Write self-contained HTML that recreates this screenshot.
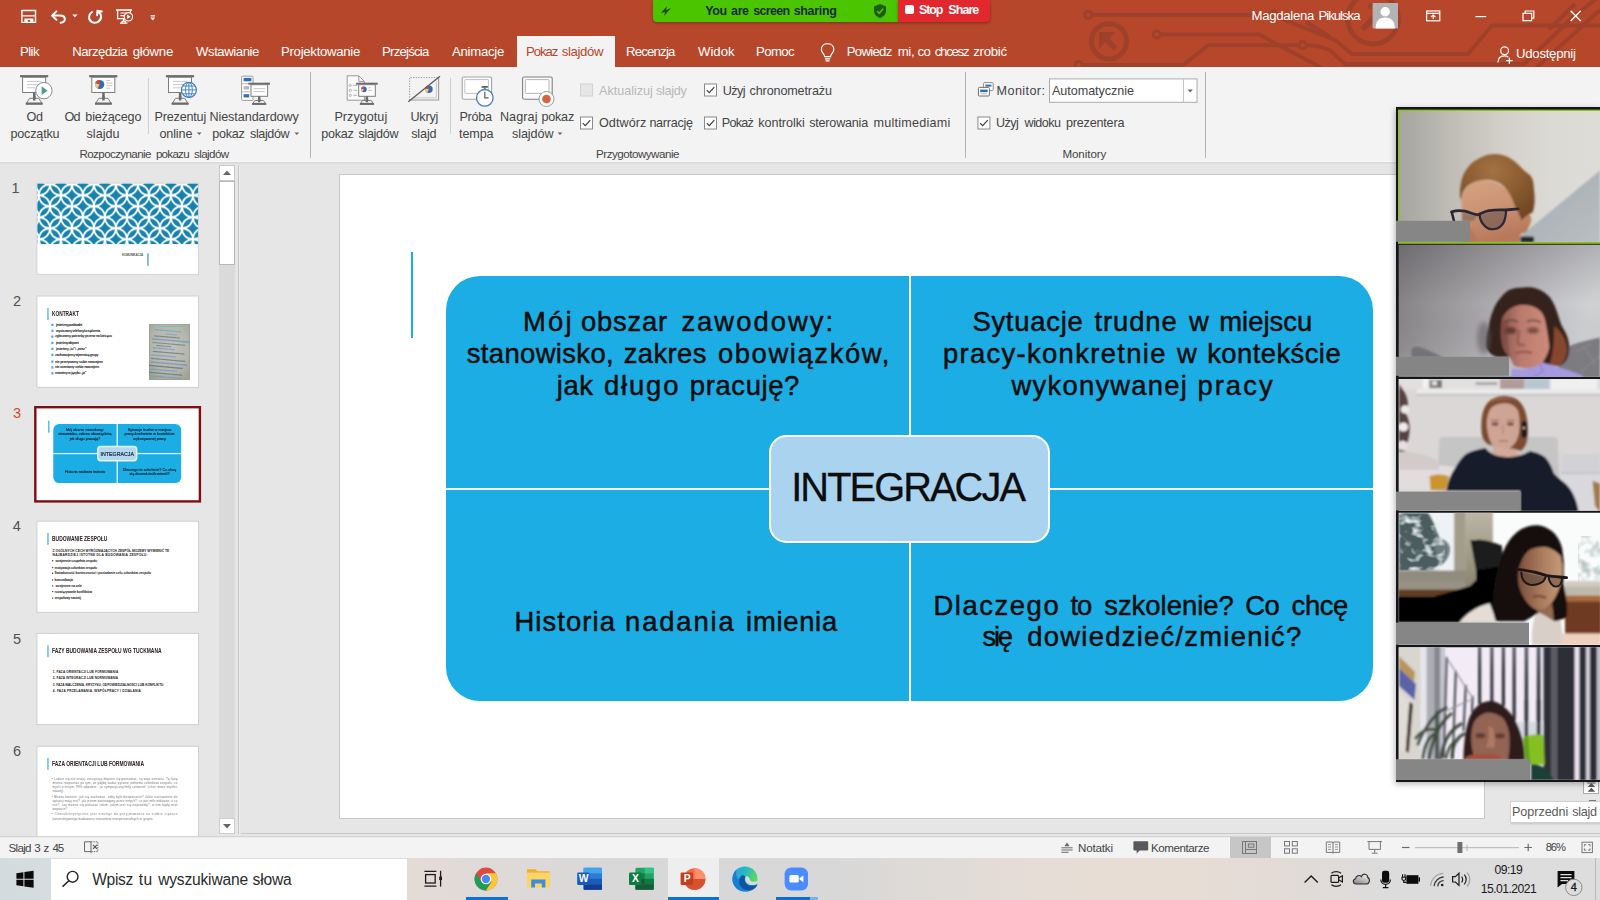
<!DOCTYPE html>
<html lang="pl">
<head>
<meta charset="utf-8">
<title>PowerPoint – Pokaz slajdów</title>
<style>
html,body{margin:0;padding:0;background:#e6e6e6;}
body{width:1600px;height:900px;overflow:hidden;font-family:"Liberation Sans",sans-serif;}
#root{position:relative;width:1600px;height:900px;overflow:hidden;background:#e6e6e6;}
.a{position:absolute;}
.t{position:absolute;white-space:pre;line-height:1;font-family:"Liberation Sans",sans-serif;}
svg{position:absolute;overflow:visible;}
</style>
</head>
<body>
<div id="root">
<!-- title bar + tab row -->
<div class="a" style="left:0;top:0;width:1600px;height:67px;background:#b7472a;"></div>
<!-- circuit decoration -->
<svg style="left:0;top:0" width="1600" height="67" viewBox="0 0 1600 67" fill="none" stroke="#9e412a" stroke-width="4" stroke-linejoin="round">
<clipPath id="tbc"><rect x="0" y="0" width="1600" height="67"/></clipPath>
<g clip-path="url(#tbc)">
<circle cx="1088.3" cy="14.8" r="3.6" stroke-width="3"/><path d="M1093 14.8 H1270"/><circle cx="1274" cy="14.8" r="3.6" stroke-width="3"/><path d="M1277 17 L1335 40 L1352 54 H1468 L1492 25.5 H1600"/>
<circle cx="1109" cy="41.3" r="17.6" stroke-width="5"/><path d="M1115.5 48.5 L1102 35" stroke-width="5.5"/><path d="M1098.8 32 H1115.7 L1098.8 49 Z" fill="#9e412a" stroke="none"/>
<circle cx="1156.7" cy="34.6" r="3.6" stroke-width="3"/><path d="M1161 34.6 H1259 L1322 68"/>
<circle cx="1078.6" cy="65" r="3.6" stroke-width="3"/><path d="M1083 65 H1183 L1208.5 45.2 H1298.5"/><circle cx="1302.7" cy="45.2" r="3.6" stroke-width="3"/><path d="M1307 45.2 C1318 45.2 1324 47 1331 51 L1345 64 H1524 L1573 17 L1600 -4"/>
<path d="M1306 22 L1330 37"/>
<circle cx="1373" cy="18.6" r="25.4" stroke-width="5"/><path d="M1362 29.5 L1382 9.5" stroke-width="5.5"/><path d="M1368 6 H1386 V24" stroke-width="5"/>
<path d="M1536 68 L1600 10"/><path d="M1549 29.5 L1575 4"/>
</g>
</svg>
<!-- active tab -->
<div class="a" style="left:516.6px;top:36px;width:98.2px;height:32px;background:#f3f3f3;"></div>
<!-- ribbon -->
<div class="a" style="left:0;top:67px;width:1600px;height:95px;background:#f3f3f3;"></div>
<div class="a" style="left:0;top:161px;width:1600px;height:1px;background:#f9f9f9;"></div>
<div class="a" style="left:0;top:162px;width:1600px;height:1px;background:#d9d9d9;"></div>
<div class="a" style="left:0;top:163px;width:1600px;height:1px;background:#dedede;"></div>
<!-- ribbon separators -->
<div class="a" style="left:148px;top:78px;width:1px;height:56px;background:#d0d0d0;"></div>
<div class="a" style="left:310px;top:72px;width:1px;height:86px;background:#b4b4b4;"></div>
<div class="a" style="left:450px;top:78px;width:1px;height:56px;background:#d0d0d0;"></div>
<div class="a" style="left:965px;top:72px;width:1px;height:86px;background:#b4b4b4;"></div>
<div class="a" style="left:1205px;top:72px;width:1px;height:86px;background:#b4b4b4;"></div>
<!-- zoom share bar -->
<div class="a" style="left:653px;top:0;width:245px;height:22px;background:#4ac500;border-radius:0 0 0 4px;box-shadow:0 1px 3px rgba(0,0,0,.35);"></div>
<div class="a" style="left:898px;top:0;width:92px;height:22px;background:#e0282e;border-radius:0 0 4px 0;box-shadow:0 1px 3px rgba(0,0,0,.35);"></div>
<div class="a" style="left:905px;top:5px;width:9px;height:9px;background:#fff;border-radius:2px;"></div>
<svg style="left:658px;top:4px" width="16" height="14" viewBox="0 0 16 14"><path d="M3 9 L9 2 L8 6 L13 4 L6 12 L7 8 Z" fill="#1d4d12"/></svg>
<svg style="left:873px;top:3px" width="14" height="16" viewBox="0 0 14 16"><path d="M7 1 L13 3.5 V8 C13 11.5 10 14 7 15 C4 14 1 11.5 1 8 V3.5 Z" fill="#1d5a14"/><path d="M4 8 L6.3 10.3 L10.2 5.8" stroke="#4ac500" stroke-width="1.6" fill="none"/></svg>
<!-- left pane / main area -->
<div class="a" style="left:0;top:164px;width:1600px;height:672px;background:#e6e6e6;"></div>
<div class="a" style="left:238px;top:165px;width:1px;height:669px;background:#c6c6c6;"></div>
<div class="a" style="left:239px;top:165px;width:1px;height:669px;background:#ededed;"></div>
<!-- thumb scrollbar -->
<div class="a" style="left:219px;top:165px;width:16px;height:653px;background:#dadada;"></div>
<div class="a" style="left:219px;top:165px;width:14px;height:14px;background:#fff;border:1px solid #c8c8c8;"></div>
<svg style="left:222px;top:169px" width="10" height="8" viewBox="0 0 10 8"><path d="M1 6 L5 1.5 L9 6 Z" fill="#666"/></svg>
<div class="a" style="left:219px;top:181px;width:14px;height:82px;background:#fff;border:1px solid #b9b9b9;"></div>
<div class="a" style="left:219px;top:818px;width:14px;height:14px;background:#fff;border:1px solid #cdcdcd;"></div>
<svg style="left:222px;top:822px" width="10" height="8" viewBox="0 0 10 8"><path d="M1 2 L5 6.5 L9 2 Z" fill="#666"/></svg>
<!-- title bar icons -->
<svg style="left:0;top:0" width="1600" height="67" viewBox="0 0 1600 67" fill="none" stroke="#fff" stroke-width="1.3">
<!-- save -->
<path d="M21.9 10.5 H35.5 V22.4 H21.9 Z M21.9 15.9 H35.5" stroke-width="1.4"/>
<path d="M24.4 18.4 H33.4 V22.6 H30.2 V20 H27.8 V22.6 H24.4 Z" fill="#fff" stroke="none"/>
<!-- undo -->
<path d="M56.4 11.4 L52 15.6 L56.4 19.8 M52.6 15.6 H60 C66.4 15.6 66.4 22.6 60.6 22.8" stroke-width="2" stroke-linejoin="round" stroke-linecap="round"/>
<path d="M72.2 14.4 H77.6 L74.9 17.2 Z" fill="#fff" stroke="none"/>
<!-- repeat -->
<path d="M92 12 C88.4 14.4 88 19.6 91.6 21.8 C95.4 24 100.6 22 101 17.2 C101.2 14.6 99.6 12.4 97.6 11.4 M97.2 15.2 L97.4 10.8 L101.8 11.4" stroke-width="2" stroke-linejoin="round" stroke-linecap="round"/>
<!-- present from start -->
<path d="M116 10 H132" stroke-width="1.6"/><path d="M117.6 10.4 V18.6 H125.4 M130.4 10.4 V12.4 M123.6 18.8 V21.8 M120 23.2 H127.4 M121.4 22.4 L123.6 20.4 L126 22.4" stroke-width="1.3"/>
<path d="M120.4 13 H126 M120.4 15.6 H124.4" stroke-width="1.1"/>
<circle cx="128.4" cy="16.8" r="4.2" stroke-width="1.2" fill="#b7472a"/><path d="M127.2 14.6 L130.6 16.8 L127.2 19 Z" fill="#fff" stroke="none"/>
<!-- customize -->
<path d="M150.6 15.8 H155"/><path d="M150.4 17.6 H155.2 L152.8 20.6 Z" fill="#fff" stroke="none"/>
<!-- bulb -->
<path d="M824.6 56.6 C824.6 54 821.4 52.6 821.4 49.4 C821.4 45.8 824.2 43.6 827.6 43.6 C831 43.6 833.8 45.8 833.8 49.4 C833.8 52.6 830.6 54 830.6 56.6 Z M825 58.8 H830.2 M825.6 60.8 H829.6" stroke-width="1.2"/>
<!-- avatar -->
<rect x="1372.6" y="3" width="25.4" height="25.4" fill="#b3b3b3" stroke="none"/>
<circle cx="1385.2" cy="11.8" r="4.7" fill="#fff" stroke="none"/>
<path d="M1375.6 28.4 C1375.6 21 1379 17.4 1385.2 17.4 C1391.4 17.4 1394.8 21 1394.8 28.4 Z" fill="#fff" stroke="none"/>
<!-- ribbon display options -->
<rect x="1426.6" y="11" width="13.2" height="9.8" stroke-width="1.2"/><path d="M1426.6 13.4 H1439.8 M1433.2 19 V15.2 M1431 17 L1433.2 14.9 L1435.4 17" stroke-width="1.1"/>
<!-- min/max/close -->
<path d="M1475.4 16.6 H1486.2" stroke-width="1.2"/>
<path d="M1523 13.4 H1531.6 V20.6 H1523 Z M1525.2 13.2 V11 H1533.8 V18.2 H1531.8" stroke-width="1.2"/>
<path d="M1570.6 10.8 L1580.8 21 M1580.8 10.8 L1570.6 21" stroke-width="1.3"/>
<!-- share icon -->
<circle cx="1504.6" cy="50.8" r="3.9" stroke-width="1.2"/><path d="M1498 62.4 C1498 57.6 1500.6 55.8 1504.4 55.8 C1506 55.8 1507.2 56.2 1508.2 57" stroke-width="1.2"/><path d="M1506 60.6 H1512.6 M1509.3 57.4 V63.8" stroke-width="1.2"/>
</svg>
<!-- ribbon icons -->
<svg style="left:0;top:0" width="1600" height="165" viewBox="0 0 1600 165">
<defs>
<g id="easel">
  <rect x="0" y="0" width="28.2" height="2.2" fill="#6b6b6b"/>
  <rect x="2.6" y="2.2" width="23" height="15.2" fill="#fff" stroke="#7d7d7d" stroke-width="1"/>
  <rect x="13" y="17.6" width="2.5" height="8" fill="#6b6b6b"/>
  <path d="M9.6 23.2 H18.8 L22.4 29 H6 Z" fill="#f3f3f3" stroke="#7d7d7d" stroke-width="1" stroke-linejoin="round"/>
  <rect x="5.8" y="27.4" width="16.8" height="2.1" fill="#6b6b6b"/>
  <rect x="13" y="21" width="2.5" height="4.4" fill="#6b6b6b"/>
</g>
<g id="easelS">
  <rect x="0" y="0" width="21.6" height="2" fill="#6b6b6b"/>
  <rect x="2.6" y="2" width="16.6" height="11.6" fill="#fff" stroke="#7d7d7d" stroke-width="1"/>
  <rect x="9.6" y="13.6" width="2.4" height="6" fill="#6b6b6b"/>
  <path d="M6.4 17.8 H15.2 L17.6 21.6 H4 Z" fill="#f3f3f3" stroke="#7d7d7d" stroke-width="1" stroke-linejoin="round"/>
  <rect x="3.8" y="20.2" width="14" height="1.9" fill="#6b6b6b"/>
  <rect x="9.6" y="15.5" width="2.4" height="4" fill="#6b6b6b"/>
</g>
<g id="pie">
  <circle cx="0" cy="0" r="4.6" fill="#2f6db5"/>
  <path d="M0 0 L-2.1 4.1 A4.6 4.6 0 0 1 -4.4 -1.4 Z" fill="#f5c77e"/>
  <path d="M0 0 L-4.4 -1.4 A4.6 4.6 0 0 1 0.3 -4.6 Z" fill="#d9482b"/>
</g>
<g id="chk"><rect x="0.5" y="0.5" width="12" height="12" fill="#fff" stroke="#8a8a8a" stroke-width="1"/><path d="M2.8 6.6 L5.3 9.2 L10.3 3.6" fill="none" stroke="#3a3a3a" stroke-width="1.15"/></g>
</defs>
<!-- 1: Od początku -->
<use href="#easel" x="20" y="75.1"/>
<g stroke="#c9c9c9" stroke-width="1"><path d="M27 81.4 H41.5 M27 84.6 H41.5 M27 87.8 H35"/></g>
<circle cx="43.9" cy="90.6" r="8.2" fill="#fff" stroke="#8a8a8a" stroke-width="1"/>
<path d="M41.6 86.3 L47.6 90.7 L41.6 95.1 Z" fill="#4d9f80"/>
<!-- 2: Od bieżącego slajdu -->
<use href="#easel" x="89.2" y="75.1"/>
<use href="#pie" x="99.7" y="84.5"/>
<g stroke="#c4c4c4" stroke-width="1"><path d="M106.2 80.6 H110 M106.2 83.1 H112.4 M106.2 85.7 H112.4 M106.2 88.2 H110"/></g>
<!-- 3: Prezentuj online -->
<use href="#easel" x="165.9" y="75.1"/>
<g stroke="#c9c9c9" stroke-width="1"><path d="M173 81.4 H187 M173 84.6 H184 M173 87.8 H181"/></g>
<circle cx="188.9" cy="89.9" r="7.5" fill="#fff" stroke="#3f7bc6" stroke-width="1.2"/>
<g fill="none" stroke="#3f7bc6" stroke-width="0.95"><ellipse cx="188.9" cy="89.9" rx="3.4" ry="7.5"/><path d="M188.9 82.4 V97.4 M181.4 89.9 H196.4 M182.6 86 H195.2 M182.6 93.8 H195.2"/></g>
<!-- 4: Niestandardowy pokaz -->
<rect x="241.6" y="76.2" width="11.4" height="24.2" rx="1" fill="#fff" stroke="#9a9a9a" stroke-width="1"/>
<rect x="243.6" y="77.9" width="7.8" height="3.4" fill="#2f6db5"/>
<rect x="243.6" y="86.2" width="5.6" height="3.3" fill="#b5b5b5"/>
<rect x="243.6" y="94.2" width="5.6" height="3.2" fill="#2f6db5"/>
<g stroke="#b9b9b9" stroke-width="1"><path d="M242 83.7 H250 M242 91.8 H250"/></g>
<rect x="247.6" y="81.9" width="23" height="24" fill="#f3f3f3" opacity="0"/>
<use href="#easelS" x="248.4" y="82.7"/>
<g stroke="#c4c4c4" stroke-width="1"><path d="M253.6 88.7 H265 M253.6 91.6 H265"/></g>
<!-- 5: Przygotuj pokaz slajdów -->
<path d="M347.2 75.8 H358.8 L364.4 81.4 V100.2 H347.2 Z" fill="#fafafa" stroke="#9a9a9a" stroke-width="1" stroke-linejoin="round"/>
<path d="M358.8 75.8 V81.4 H364.4" fill="none" stroke="#9a9a9a" stroke-width="1"/>
<g fill="none" stroke="#a8a8a8" stroke-width="0.9"><circle cx="350.3" cy="85.4" r="1.1"/><circle cx="350.3" cy="90.3" r="1.1"/><circle cx="350.3" cy="95.3" r="1.1"/><path d="M353.4 85.4 H357 M353.4 90.3 H357 M353.4 95.3 H357"/></g>
<use href="#easelS" x="356.1" y="82.7"/>
<g transform="translate(363.9 89.3) scale(0.62)"><use href="#pie"/></g>
<g stroke="#c4c4c4" stroke-width="1"><path d="M368.4 87.8 H371 M368.4 90.4 H372"/></g>
<!-- 6: Ukryj slajd -->
<path d="M409.6 100 V77.6 H438.6" fill="none" stroke="#8a8a8a" stroke-width="1" stroke-dasharray="1.1 1.5"/>
<path d="M438.6 77.6 V100 H409.6" fill="none" stroke="#9c9c9c" stroke-width="1.1"/>
<path d="M436.4 81.5 V97.8 H414" fill="none" stroke="#c9c9c9" stroke-width="1"/>
<g transform="translate(428.9 89.3) scale(0.82)"><use href="#pie"/></g>
<path d="M408.3 101.7 L440 76.3" stroke="#5e5e5e" stroke-width="1.4"/>
<path d="M409.2 99.4 L437 77.2 L409.2 77.2 Z" fill="#f3f3f3" opacity="0.0"/>
<!-- 7: Próba tempa -->
<rect x="462.2" y="77" width="29.4" height="22.2" rx="1.6" fill="#fbfbfb" stroke="#a5a5a5" stroke-width="1.1"/>
<rect x="464.8" y="79.6" width="23.6" height="13.8" rx="0.8" fill="#fff" stroke="#c2c2c2" stroke-width="1"/>
<rect x="481.6" y="86" width="6.2" height="1.8" fill="#5e5e5e"/><rect x="483.8" y="87.6" width="1.9" height="2" fill="#7a7a7a"/>
<circle cx="484.8" cy="97.8" r="8.3" fill="#fff" stroke="#3f7bc6" stroke-width="1.3"/>
<path d="M484.8 91.8 V97.8 H488.6" fill="none" stroke="#5e5e5e" stroke-width="1.2"/>
<!-- 8: Nagraj pokaz slajdów -->
<rect x="522.6" y="77" width="29.6" height="22.2" rx="1.6" fill="#fbfbfb" stroke="#7f7f7f" stroke-width="1.1"/>
<rect x="525.4" y="79.6" width="23.6" height="13.8" rx="0.8" fill="#fff" stroke="#b5b5b5" stroke-width="1"/>
<circle cx="546.5" cy="99" r="7.5" fill="#fff" stroke="#9a9a9a" stroke-width="1"/>
<circle cx="546.5" cy="99" r="4.3" fill="#d95f3e"/>
<!-- dropdown arrows -->
<g fill="#666"><path d="M196.8 132.4 H201.6 L199.2 135 Z"/><path d="M294.4 132.4 H299.2 L296.8 135 Z"/><path d="M557.6 132.4 H562.4 L560 135 Z"/></g>
<!-- checkboxes -->
<rect x="580.5" y="84" width="12" height="12" fill="#e6e6e6" stroke="#d2d2d2" stroke-width="1"/>
<use href="#chk" x="580" y="116.5"/>
<use href="#chk" x="704" y="83.5"/>
<use href="#chk" x="704" y="116.5"/>
<use href="#chk" x="977.4" y="116.5"/>
<!-- monitor combo -->
<rect x="1049.5" y="78.9" width="147.5" height="23.4" fill="#fff" stroke="#ababab" stroke-width="1"/>
<path d="M1183.5 79 V102" stroke="#c4c4c4" stroke-width="1"/>
<path d="M1187.6 89.6 H1192.8 L1190.2 92.4 Z" fill="#666"/>
<!-- monitor icon -->
<rect x="983.6" y="82.6" width="9.6" height="8" rx="1" fill="#fff" stroke="#8a8a8a" stroke-width="1"/><rect x="985.4" y="84.6" width="6" height="2" fill="#2f6db5"/>
<rect x="978.4" y="87.4" width="11" height="8.6" rx="1" fill="#fff" stroke="#6f6f6f" stroke-width="1"/><rect x="980.2" y="89.6" width="7.4" height="2.6" fill="#2f6db5"/><path d="M980.5 93.8 H987" stroke="#b5b5b5" stroke-width="0.9"/>
</svg>
<!-- slide thumbnails -->
<svg style="left:0;top:164px" width="219" height="672" viewBox="0 164 219 672">
<defs>
<pattern id="circ" x="38.9" y="184.3" width="22" height="22" patternUnits="userSpaceOnUse">
<rect width="22" height="22" fill="#1782ad"/>
<g fill="none" stroke="#fff" stroke-width="1.75"><circle cx="0" cy="0" r="11"/><circle cx="22" cy="0" r="11"/><circle cx="0" cy="22" r="11"/><circle cx="22" cy="22" r="11"/><circle cx="11" cy="11" r="11"/><circle cx="11" cy="-11" r="11"/><circle cx="11" cy="33" r="11"/><circle cx="-11" cy="11" r="11"/><circle cx="33" cy="11" r="11"/></g>
</pattern>
<radialGradient id="paperG" cx=".5" cy=".42" r=".75"><stop offset="0" stop-color="#c0c4bb"/><stop offset=".6" stop-color="#b3b7ad"/><stop offset="1" stop-color="#9b9e92"/></radialGradient><filter id="tb" x="-5%" y="-5%" width="110%" height="110%"><feGaussianBlur stdDeviation="0.45"/></filter><clipPath id="ph2"><rect x="149" y="324" width="41" height="56"/></clipPath>
<clipPath id="t6c"><rect x="30" y="740" width="180" height="96"/></clipPath>
</defs>
<!-- 1 -->
<rect x="36.9" y="183.2" width="161.6" height="91.2" fill="#fff" stroke="#d4d4d4" stroke-width="1"/>
<rect x="37.4" y="183.7" width="160.6" height="60.4" fill="url(#circ)"/>
<rect x="147.2" y="253.4" width="1.5" height="12.4" fill="#5fa8cf"/>
<!-- 2 -->
<rect x="36.9" y="296" width="161.6" height="91.4" fill="#fff" stroke="#cfcfcf" stroke-width="1"/>
<rect x="47.2" y="308.2" width="1.5" height="11.8" fill="#63bdea"/>
<g fill="#4aa9e0"><rect x="51.3" y="323.7" width="2.1" height="2.3"/><rect x="51.3" y="329.7" width="2.1" height="2.3"/><rect x="51.3" y="335.5" width="2.1" height="2.3"/><rect x="51.3" y="341.8" width="2.1" height="2.3"/><rect x="51.3" y="347.7" width="2.1" height="2.3"/><rect x="51.3" y="353.7" width="2.1" height="2.3"/><rect x="51.3" y="360.5" width="2.1" height="2.3"/><rect x="51.3" y="366.3" width="2.1" height="2.3"/><rect x="51.3" y="372.1" width="2.1" height="2.3"/></g>
<rect x="149" y="324" width="41" height="56" fill="#9c9f93"/>
<rect x="150" y="324.6" width="39.4" height="54.4" fill="url(#paperG)"/>
<g filter="url(#tb)" fill="none" stroke-linecap="round" clip-path="url(#ph2)">
<path d="M158 326.4 H182" stroke="#86bca4" stroke-width="1.3"/>
<g transform="rotate(5 150 330)" stroke-dasharray="2.6 0.9 1.6 0.7 3.4 1.1 1.2 0.6" opacity=".62">
<path d="M155 329.2 H181 M166 332.6 H177" stroke="#6f97c6" stroke-width="1.2"/>
<path d="M155 335.4 H180" stroke="#62676a" stroke-width="1.2"/>
<path d="M153 338.6 H190" stroke="#5b8cc8" stroke-width="1.4"/>
<path d="M154 342.2 H186 M158 344.8 H172" stroke="#666b6c" stroke-width="1.1"/>
<path d="M155 347.4 H176" stroke="#6a96c8" stroke-width="1.3"/>
<path d="M155 351 H186" stroke="#62676a" stroke-width="1.2"/>
<path d="M154 354.6 H178" stroke="#6a96c8" stroke-width="1.3"/>
<path d="M154 358.2 H188" stroke="#5e6366" stroke-width="1.2"/>
<path d="M154 361.8 H190" stroke="#5b8cc8" stroke-width="1.4"/>
<path d="M152 365.4 H186" stroke="#585d60" stroke-width="1.3"/>
<path d="M152 368.8 H180" stroke="#6a96c8" stroke-width="1.3"/>
<path d="M152 372.2 H186" stroke="#5e6366" stroke-width="1.2"/>
<path d="M152 375.6 H186" stroke="#6a96c8" stroke-width="1.2"/>
</g>
</g>
<!-- 3 (selected) -->
<rect x="35.3" y="407.2" width="164.6" height="94.2" fill="#fff" stroke="#7b0f12" stroke-width="2.4"/>
<!-- 4 -->
<rect x="36.9" y="521.2" width="161.6" height="91.2" fill="#fff" stroke="#cfcfcf" stroke-width="1"/>
<rect x="47.2" y="533" width="1.5" height="11.8" fill="#63bdea"/>
<g fill="#333"><circle cx="52.6" cy="560.8" r=".7"/><circle cx="52.6" cy="567.6" r=".7"/><circle cx="52.6" cy="573.3" r=".7"/><circle cx="52.6" cy="579.9" r=".7"/><circle cx="52.6" cy="585.9" r=".7"/><circle cx="52.6" cy="591.6" r=".7"/><circle cx="52.6" cy="598.1" r=".7"/></g>
<!-- 5 -->
<rect x="36.9" y="633.4" width="161.6" height="91.2" fill="#fff" stroke="#cfcfcf" stroke-width="1"/>
<rect x="47.2" y="645.4" width="1.5" height="11.8" fill="#63bdea"/>
<!-- 6 -->
<g clip-path="url(#t6c)">
<rect x="36.9" y="746.3" width="161.6" height="91.2" fill="#fff" stroke="#cfcfcf" stroke-width="1"/>
<rect x="47.2" y="758" width="1.5" height="11.8" fill="#63bdea"/>
</g>
</svg>
<!-- thumbnail 3: scaled copy of the slide -->
<div class="a" style="left:37.8px;top:410.1px;width:160.5px;height:89.8px;overflow:hidden;">
<div class="a" style="left:0;top:0;width:1145px;height:644px;transform-origin:0 0;transform:scale(0.139);">
<div class="a" style="left:72px;top:77px;width:11px;height:86px;background:#55c0ee;"></div>
<div class="a" style="left:110px;top:101px;width:920px;height:425px;background:#1cade4;border-radius:42px;"></div>
<div class="a" style="left:565px;top:101px;width:10px;height:425px;background:#dff3fc;"></div>
<div class="a" style="left:110px;top:309px;width:920px;height:9px;background:#dff3fc;"></div>
<div class="a" style="left:425px;top:258px;width:290px;height:112px;background:#b4d8f0;border:10px solid #e6f4fc;border-radius:26px;box-sizing:border-box;"></div>
<div class="a" style="left:110px;top:124px;width:455px;text-align:center;font-size:27px;line-height:32px;color:#123;-webkit-text-stroke:1.1px #123;">Mój obszar zawodowy:<br>stanowisko, zakres obowiązków,<br>jak długo pracuję?</div>
<div class="a" style="left:575px;top:124px;width:455px;text-align:center;font-size:27px;line-height:32px;color:#123;-webkit-text-stroke:1.1px #123;">Sytuacje trudne w miejscu<br>pracy-konkretnie w kontekście<br>wykonywanej pracy</div>
<div class="a" style="left:110px;top:431px;width:455px;text-align:center;font-size:27px;line-height:32px;color:#123;-webkit-text-stroke:1.1px #123;">Historia nadania imienia</div>
<div class="a" style="left:575px;top:414px;width:455px;text-align:center;font-size:27px;line-height:32px;color:#123;-webkit-text-stroke:1.1px #123;">Dlaczego to szkolenie? Co chcę<br>się dowiedzieć/zmienić?</div>
<div class="a" style="left:425px;top:293px;width:290px;text-align:center;font-size:38px;line-height:44px;color:#123;-webkit-text-stroke:1.2px #123;">INTEGRACJA</div>
</div>
</div>
<!-- slide -->
<div class="a" style="left:339px;top:174px;width:1146px;height:645px;background:#fff;border:1px solid #c9c9c9;box-sizing:border-box;"></div>
<div class="a" style="left:411px;top:252px;width:2px;height:86px;background:#1cade4;"></div>
<div class="a" style="left:446px;top:276px;width:927px;height:425px;background:#1cade4;border-radius:34px;"></div>
<div class="a" style="left:909px;top:276px;width:2px;height:425px;background:#fff;"></div>
<div class="a" style="left:446px;top:488px;width:927px;height:2px;background:#fff;"></div>
<div class="a" style="left:769px;top:435px;width:281px;height:108px;background:#aad3ef;border:2px solid #fff;border-radius:17.5px;box-sizing:border-box;"></div>
<!-- next/prev slide buttons + tooltip -->
<div class="a" style="left:1583px;top:781px;width:16px;height:13px;background:#fff;border:1px solid #ababab;box-sizing:border-box;"></div>
<div class="a" style="left:1510px;top:801px;width:92px;height:22px;background:#fff;border:1px solid #d0d0d0;box-sizing:border-box;box-shadow:1px 1px 2px rgba(0,0,0,.15);"></div>
<!-- zoom video panel -->
<div class="a" style="left:1396px;top:107px;width:204px;height:675px;background:#15161a;box-shadow:-1px 2px 6px rgba(0,0,0,.3);"></div>
<svg style="left:1396px;top:107px" width="204" height="675" viewBox="1396 107 204 675">
<defs>
<filter id="b1" x="-10%" y="-10%" width="120%" height="120%"><feGaussianBlur stdDeviation="0.9"/></filter>
<filter id="b2" x="-10%" y="-10%" width="120%" height="120%"><feGaussianBlur stdDeviation="2.2"/></filter>
<filter id="b3" x="-10%" y="-10%" width="120%" height="120%"><feGaussianBlur stdDeviation="0.55"/></filter>
<filter id="b4" x="-10%" y="-10%" width="120%" height="120%"><feGaussianBlur stdDeviation="4"/></filter>
<filter id="tree" x="0" y="0" width="100%" height="100%"><feTurbulence type="fractalNoise" baseFrequency="0.09 0.12" numOctaves="2" seed="7"/><feColorMatrix type="matrix" values="0 0 0 0 0.82  0 0 0 0 0.88  0 0 0 0 0.9  3.2 0 0 0 -1.55"/><feGaussianBlur stdDeviation="0.5"/></filter>
<filter id="tree2" x="0" y="0" width="100%" height="100%"><feTurbulence type="fractalNoise" baseFrequency="0.1 0.09" numOctaves="2" seed="3"/><feColorMatrix type="matrix" values="0 0 0 0 0.5  0 0 0 0 0.58  0 0 0 0 0.57  3 0 0 0 -1.25"/><feGaussianBlur stdDeviation="0.5"/></filter>
<clipPath id="v1"><rect x="1399.5" y="111" width="200.5" height="131"/></clipPath>
<clipPath id="v2"><rect x="1398.7" y="244.8" width="201.3" height="132"/></clipPath>
<clipPath id="v3"><rect x="1398.7" y="379" width="201.3" height="131.8"/></clipPath>
<clipPath id="v4"><rect x="1398.7" y="512.8" width="201.3" height="132.2"/></clipPath>
<clipPath id="v5"><rect x="1398.7" y="647.2" width="201.3" height="132.6"/></clipPath>
<linearGradient id="g1" x1="0" y1="0" x2="1" y2="0"><stop offset="0" stop-color="#a5a49e"/><stop offset=".25" stop-color="#bebcb5"/><stop offset=".5" stop-color="#d2cfc9"/><stop offset=".75" stop-color="#dcdad4"/><stop offset="1" stop-color="#dedcd7"/></linearGradient>
<linearGradient id="g1s" x1="0" y1="0" x2="1" y2="1"><stop offset="0" stop-color="#a2aab0"/><stop offset="1" stop-color="#b9bfc2"/></linearGradient>
<radialGradient id="hair1" cx=".45" cy=".25" r=".8"><stop offset="0" stop-color="#a27243"/><stop offset=".5" stop-color="#8b5c30"/><stop offset="1" stop-color="#6f4522"/></radialGradient>
<linearGradient id="skin1" x1="0" y1="0" x2="0.3" y2="1"><stop offset="0" stop-color="#d7a383"/><stop offset=".5" stop-color="#cb9474"/><stop offset="1" stop-color="#b7785b"/></linearGradient>
<linearGradient id="g2" x1="0" y1="0" x2="1" y2="0.2"><stop offset="0" stop-color="#7f7c80"/><stop offset=".3" stop-color="#9a979b"/><stop offset=".6" stop-color="#b2b0b4"/><stop offset=".85" stop-color="#c6c6ca"/><stop offset="1" stop-color="#cfd1d3"/></linearGradient>
<linearGradient id="g2v" x1="0" y1="0" x2="0" y2="1"><stop offset="0" stop-color="#000" stop-opacity=".14"/><stop offset=".45" stop-color="#000" stop-opacity="0"/><stop offset="1" stop-color="#fff" stop-opacity=".12"/></linearGradient>
<linearGradient id="skin2" x1="0" y1="0" x2="1" y2="0"><stop offset="0" stop-color="#8a544c"/><stop offset=".4" stop-color="#b87a6e"/><stop offset="1" stop-color="#cf8c7b"/></linearGradient>
<linearGradient id="skin4" x1="0" y1="0" x2="1" y2="0"><stop offset="0" stop-color="#7a4c38"/><stop offset=".5" stop-color="#a77a5c"/><stop offset="1" stop-color="#c79a7a"/></linearGradient>
<linearGradient id="col4" x1="0" y1="0" x2="0" y2="1"><stop offset="0" stop-color="#bcb6a6"/><stop offset="1" stop-color="#88826f"/></linearGradient>
<linearGradient id="blind5" x1="0" y1="0" x2="0" y2="1"><stop offset="0" stop-color="#5c5c68"/><stop offset=".4" stop-color="#3a3a44"/><stop offset="1" stop-color="#303038"/></linearGradient>
</defs>
<!-- tile 1 -->
<rect x="1398" y="109.6" width="203" height="134.2" fill="#8cc11f"/>
<g clip-path="url(#v1)">
<rect x="1399" y="110" width="202" height="133" fill="url(#g1)"/>
<g filter="url(#b1)">
<path d="M1529.8 228.6 L1600 170.5 V243 H1512 Z" fill="url(#g1s)"/>
<path d="M1462 243 L1461.5 200 C1462 190 1470 182 1480 180.5 C1492 179 1504 184 1511 195 L1521.6 220.5 L1525 214 C1529 212 1532 216 1531 222 L1526.5 232 L1520.5 234 L1519.3 243 Z" fill="url(#skin1)"/>
<path d="M1462 222 C1470 226 1476 234 1478 243 H1462 Z" fill="#b4795c"/>
<path d="M1460.8 200.6 C1459.6 195 1459.8 190 1460.4 186.6 C1461 182 1462 178 1463.3 175 C1465 171 1467.4 167.6 1470.3 164.5 C1472.6 162 1475.4 160.2 1478.5 158.7 C1482 157 1485.4 155.4 1489 154.6 C1493 153.8 1497 153.8 1500.6 154.6 C1505 155.6 1509 157.4 1512.3 159.8 C1515.8 162.2 1518.8 165 1521.6 168 C1525 171.6 1528.4 173.6 1531 176.2 C1533.4 180 1533.8 184.6 1533.9 189 C1534.6 193.6 1534.8 198.4 1534.5 203 C1534.2 206.4 1533.6 209.6 1532.7 212.3 L1528.6 214.6 C1526 216 1523.6 218.6 1521.6 220.5 C1519.4 215 1517 210 1514.6 205.3 C1513.4 201.6 1511.8 198 1510 194.8 C1508 191.2 1505.8 188 1503 185.5 C1499.6 182.6 1495.6 181 1491.3 180.2 C1487 179.6 1482.6 179.8 1478.5 180.8 C1474.6 181.8 1471 183.4 1468 185.5 C1465.8 187.4 1464 189.8 1462.7 192.5 Z" fill="url(#hair1)"/>
<path d="M1479.7 214.6 C1479.8 218 1481 221.6 1483.1 224 C1485.4 227 1488 229 1491.3 229.2 C1495 229.4 1498.4 228.4 1500.6 226.3 C1503.4 223.8 1504.8 220.4 1505.3 217 L1505.9 211.1 C1497 210 1488 211 1479.7 214.6 Z" fill="#6b5550" opacity=".6"/><path d="M1462 212 L1477 214.8 C1476 219 1474 221 1470 221.4 L1462 221 Z" fill="#6b5550" opacity=".5"/>
<rect x="1520.5" y="236.6" width="13.6" height="6" rx="1.5" fill="#23252a"/>
</g>
<g filter="url(#b3)" fill="none" stroke="#2a2835" stroke-width="2.6" stroke-linecap="round">
<path d="M1451.6 211.8 C1456 210.4 1461 210.4 1465 211.2 C1470 212.4 1474 214.6 1477.6 214.8 C1481 213.6 1485 211.2 1489 210.6 C1494.6 209.8 1500 209.9 1505.3 210 L1518.1 208.8" stroke-width="2.8"/>
<path d="M1479.7 214.6 C1479.8 218 1481 221.6 1483.1 224 C1485.4 227 1488 229 1491.3 229.2 C1495 229.4 1498.4 228.4 1500.6 226.3 C1503.4 223.8 1504.8 220.4 1505.3 217 C1505.8 215 1506 213 1505.9 211.1" stroke-width="2.2"/>
<path d="M1451.8 212.3 L1454 221"/>
</g>
</g>
<rect x="1396" y="220.8" width="74" height="21" fill="#868686"/>
<!-- tile 2 -->
<g clip-path="url(#v2)">
<rect x="1398" y="244" width="203" height="134" fill="url(#g2)"/>
<rect x="1398" y="244" width="203" height="134" fill="url(#g2v)"/>
<g filter="url(#b1)">
<path d="M1562 349 C1572 344 1588 340 1600 337.5 V378 H1556 Z" fill="#7b7b80"/>
<path d="M1575 352 L1592 344 M1580 372 L1600 356 M1584 346 L1596 366" stroke="#8b8b90" stroke-width="1.2" fill="none"/>
<path d="M1411 351 C1412 346 1418 345.6 1424 348.4 L1443 357 H1412 Z" fill="#737277"/>
<path d="M1486.3 347.3 C1485.6 340 1487 333 1488.7 327.5 C1489.6 321 1491 315 1493.3 310 C1495 305.4 1497.4 301.4 1500.3 298.3 C1502.6 295 1505.4 292.2 1508.5 290.2 C1511.8 288.6 1515.4 288 1519 287.8 C1523 287.2 1527 287 1530.7 287.3 C1535 287.8 1539 289.2 1542.3 291.3 C1545.6 293.2 1548.4 295.4 1550.5 298.3 C1553 301.8 1554.8 305.8 1556.3 310 C1558 314.6 1559.2 319.6 1561 324 C1562.6 328 1565.4 331.6 1566.9 335.7 C1568.6 340 1569.4 345 1569.2 349.7 C1569 354 1567.8 358 1565.7 361.3 C1563.8 363.6 1561.4 365.2 1558.7 366 L1549.3 364.8 L1509.7 356.7 L1498 357 C1492 356 1488 352 1486.3 347.3 Z" fill="#34201b"/>
<path d="M1554 326 C1560 330 1566 338 1567 348 C1567.6 356 1564 363 1558.7 366 L1549.3 364.8 C1553 356 1554.6 340 1554 326 Z" fill="#87472d"/>
<path d="M1501.5 321.7 C1502 318 1503.2 315.4 1505 313.5 C1508.6 309 1513.6 306.2 1519 305.3 C1523.6 304.8 1528.6 305.2 1533 306.5 C1537 308 1540.2 310.4 1542.3 313.5 C1544.2 316.6 1545.2 320.2 1545.8 324 C1546.8 328.6 1547.6 333.4 1548.2 338 L1549.3 347.3 C1548.4 351.6 1546.8 355.6 1544.7 359 C1543.4 361.6 1541.8 364 1540 366 C1535.6 367.8 1530.8 368.4 1526 368.3 C1522 368 1518 367.2 1514.3 366 L1509.7 356.7 C1507.2 354.8 1505.2 352.4 1503.8 349.7 C1502 345.4 1501.2 340.6 1500.9 335.7 C1500.6 331 1500.8 326.2 1501.5 321.7 Z" fill="url(#skin2)"/>
<ellipse cx="1510.5" cy="330.6" rx="6.2" ry="3.6" fill="#4a2a26" opacity=".75" filter="url(#b1)"/>
<ellipse cx="1533" cy="330.4" rx="6" ry="3.2" fill="#5a342e" opacity=".7" filter="url(#b1)"/>
<path d="M1504 322 C1508 319.4 1514 319.6 1518 322 M1527 321.6 C1531 319.6 1538 320 1541 322.6" stroke="#5a342c" stroke-width="1.8" fill="none" opacity=".7"/>
<path d="M1519.6 330 C1517.6 338 1516.8 342 1519 345 L1525 345" stroke="#8a4e46" stroke-width="3" fill="none" opacity=".6"/>
<path d="M1515 353.4 C1520 351.6 1527 351.6 1532 353" stroke="#94504a" stroke-width="2" fill="none"/>
<path d="M1501.5 321.7 C1500.6 331 1501 343 1505 351 L1510 356.7 C1508 346 1507 334 1509 322 Z" fill="#6f3f38" opacity=".45"/>
<ellipse cx="1484" cy="338" rx="7" ry="16" fill="#5d595d" opacity=".55" filter="url(#b2)"/>
<path d="M1512 368.3 C1522 371 1534 368 1540 364 L1542 362.5 C1548 364 1556 366.6 1564 369 C1572 371.4 1578 373.6 1582 375.3 L1584 378 H1510 Z" fill="#a59ae0"/>
<path d="M1540 364 L1543 371 L1534 377" stroke="#8d82c8" stroke-width="1.4" fill="none"/>
</g>
</g>
<rect x="1396" y="356.8" width="113" height="19" fill="#858585"/>
<!-- tile 3 -->
<g clip-path="url(#v3)">
<rect x="1398" y="378" width="203" height="134" fill="#dbd7d7"/>
<g filter="url(#b1)">
<rect x="1398" y="378" width="203" height="11.4" fill="#e2dfdf"/>
<rect x="1422.8" y="378.6" width="5.4" height="10" fill="#f4f2f0"/><rect x="1429.6" y="380" width="12.4" height="8" fill="#7a7676"/><rect x="1432" y="381" width="5" height="4.4" fill="#e0dede"/>
<rect x="1475.7" y="382.4" width="21.6" height="2.4" fill="#9c9a9a"/>
<rect x="1500" y="378.6" width="26" height="10.4" fill="#b29c9a"/><rect x="1524" y="378.6" width="25.4" height="10.4" fill="#b7c8d1"/><rect x="1551" y="378.6" width="46" height="10.4" fill="#f0f0f0"/>
<rect x="1416.8" y="389.2" width="184" height="4.6" fill="#ebebed"/><rect x="1416.8" y="393.8" width="184" height="2" fill="#c5c1c1"/>
<path d="M1399 384 C1406 392 1411 404 1406 414 C1412 424 1410 440 1404 450 C1412 460 1414 474 1404 482 H1399 Z" fill="#54423f"/>
<circle cx="1405" cy="409.4" r="4.2" fill="#eeeaea"/><circle cx="1403.4" cy="427" r="4.6" fill="#f0ecec"/><circle cx="1402.8" cy="445.5" r="4.8" fill="#e6e0e0"/>
<path d="M1443 436.8 H1554 C1556.4 436.8 1557.6 438.2 1557.8 440.6 L1561 512 H1436 L1439.2 440.6 C1439.4 438.2 1440.8 436.8 1443 436.8 Z" fill="#c6c5c5"/>
<path d="M1561.3 454 H1600 V512 H1561.3 Z" fill="#d2d2d6"/><path d="M1561.3 473.3 H1600" stroke="#bebec4" stroke-width="1.6"/><rect x="1561.3" y="474" width="39" height="38" fill="#d9d9dd"/>
<path d="M1399 470 C1412 464 1436 464 1455.6 467.3 L1446.6 489.7 H1399 Z" fill="#e3dcdc"/>
<path d="M1399 452 C1410 450 1430 456 1439 462 V470 H1399 Z" fill="#d3caca"/>
<path d="M1429.5 476 C1436 473.6 1445 474 1449 476.4 L1446 490 H1430.6 Z" fill="#c9952f"/>
<path d="M1592.5 480.7 L1600 483.6 V512 L1595 506 Z" fill="#a17a46"/>
<path d="M1482.4 437.6 C1481.2 431.6 1481 425.6 1481.6 419.7 C1482 414.8 1483.2 410.2 1485.3 406.3 C1487.4 402.6 1490.4 399.8 1494.3 398.1 C1498 396.4 1502 395.7 1506.2 395.9 C1510.6 396.2 1514.8 397.6 1518.1 400.3 C1521.6 403.2 1524 407.4 1525.5 412.2 C1527 417.4 1527.8 423 1527.8 428.6 C1528 433 1527.8 437.6 1527 442 C1525.8 446 1523.8 449 1521 451 L1515.1 449.5 L1489 445 C1485.8 443.6 1483.6 440.8 1482.4 437.6 Z" fill="#7d4c33"/>
<path d="M1490 400 C1497 396.6 1510 396.6 1516 400 C1510 399 1497 399.4 1490 402 Z" fill="#9c6444"/>
<path d="M1486.8 422.7 C1487 417 1488.4 411.8 1491.3 407.8 C1495 404.6 1500.4 403.2 1506.2 403.3 C1511 403.6 1515.4 406.4 1518.1 410.8 C1519.4 416 1519.8 421.6 1519.6 427.1 C1519.4 431.8 1518.4 436.4 1516.6 440.5 C1514 445.4 1509.2 449.6 1503.2 451 C1498 450.4 1494 447.6 1491.3 443.5 C1488.4 437.6 1486.8 430.2 1486.8 422.7 Z" fill="#cea595"/>
<path d="M1492.8 447 L1515 449 L1519.6 456 L1506 459 L1492.8 455 Z" fill="#d2a99b"/>
<path d="M1446.6 489.7 C1448 481 1451 473.6 1455.6 467.3 C1458.4 462 1461.8 457.4 1466 454 C1472 450.8 1478.6 449 1485.3 448 C1487.4 450.6 1490 452.6 1492.8 454 C1497 456.2 1501.6 457 1506.2 457 C1510.8 457 1515.4 456.4 1519.6 455.4 C1523.4 454.6 1527 453 1530 451 C1535.4 452 1540.6 454 1544.9 457 C1549 461.4 1552 467 1553.8 473.3 L1559.8 479.3 C1564.6 482.4 1568.8 486.4 1571.7 491.2 C1575 497 1577.4 503.6 1578.4 510.5 L1578.4 512 H1520 V491 H1446.6 Z" fill="#131c2b"/>
<rect x="1521.6" y="421.2" width="5" height="16.6" rx="2.2" fill="#17171c"/><circle cx="1523.8" cy="428" r="1.1" fill="#e8e8e8"/>
<ellipse cx="1495" cy="424" rx="3.6" ry="1.9" fill="#5e4038" opacity=".75"/><ellipse cx="1510.4" cy="424" rx="3.6" ry="1.9" fill="#5e4038" opacity=".75"/><path d="M1490.6 420.4 H1499 M1506.4 420.4 H1514.6" stroke="#8a5e4e" stroke-width="1.2" opacity=".7"/>
<path d="M1499 441 H1508" stroke="#a87468" stroke-width="1.5"/>
<path d="M1503 425 V434" stroke="#b88c7e" stroke-width="1.6"/>
</g>
</g>
<rect x="1396" y="491.6" width="124.3" height="18.8" fill="#868686"/>
<!-- tile 4 -->
<g clip-path="url(#v4)">
<rect x="1398" y="512" width="203" height="134" fill="#fafcfc"/>
<rect x="1399" y="513" width="55.2" height="58" fill="#eef2f4"/>
<g filter="url(#b1)"><path d="M1399 513 H1428 C1434 522 1440 536 1441 548 C1442 558 1440 566 1436 571 H1399 Z" fill="#4c5d5f"/><path d="M1432 540 C1440 536 1448 540 1450 548 C1450 556 1446 562 1440 566 Z" fill="#6d7d7f"/></g>
<rect x="1399" y="513" width="46" height="58" filter="url(#tree)"/>
<rect x="1578" y="536" width="22" height="45" filter="url(#tree2)"/>
<g filter="url(#b1)">
<rect x="1454.2" y="512" width="11.6" height="71" fill="#a39b8b"/>
<rect x="1398" y="570.7" width="68" height="11.6" fill="#8f8b7d"/>
<rect x="1398" y="582" width="81" height="8" fill="#989284"/>
<rect x="1465.5" y="512" width="27.4" height="78" fill="url(#col4)"/>
<rect x="1565" y="581.3" width="36" height="14.6" fill="#bfb9ab"/><rect x="1565" y="581.3" width="36" height="5" fill="#d0ccc2"/>
<rect x="1565" y="595.6" width="36" height="6.4" fill="#a9693d"/>
<rect x="1565" y="601.6" width="36" height="33" fill="#6e3a20"/>
<rect x="1560" y="633.4" width="41" height="12" fill="#efd0c0"/>
<rect x="1398" y="589.6" width="62" height="7.2" fill="#5e3c22"/>
<path d="M1398 596.4 H1434 L1470 586 L1476 580 V540 C1480 539 1492 541 1501.8 545.8 L1506 600 L1495 622.4 H1398 Z" fill="#060606"/>
<path d="M1470.4 540 C1480 539.4 1492 541.6 1501.8 545.8 L1503 566 L1476 570 Z" fill="#1c1f1a"/>
<path d="M1459.5 622.4 C1466 613 1478 606 1489.7 603.2 L1497 622.4 Z" fill="#e5ddd5"/>
<path d="M1532 645 C1531 630 1533 618 1538 610 L1556 606 C1561 616 1563 632 1562.2 645 Z" fill="#d8d0c8"/>
<path d="M1492.7 601.7 C1493.6 587 1496 573 1500.3 560.9 C1502 554 1504.4 547.8 1507.8 542.7 C1511.4 537 1516 532.4 1521.4 529.1 C1527 526 1533.2 524.8 1539.5 525.4 C1545.4 526.4 1550.6 529.4 1554.7 533.7 C1558.4 538 1561 543.2 1562.2 548.8 L1563.7 560.9 L1563.7 583.5 C1564.8 589.6 1566 595.6 1566.7 601.7 C1567.4 606.8 1567.4 611.8 1566.7 616.8 C1563 619.4 1559 620.8 1554.7 621.3 L1540 612 L1524.4 621.3 H1495.7 C1493.6 615 1492.6 608.4 1492.7 601.7 Z" fill="#120e0d"/>
<path d="M1518.4 571.4 C1519.6 563 1523.4 555.6 1529 550.3 C1534.6 547.2 1541 546.4 1547.1 547.3 C1552.6 549 1557.4 552 1560.7 556.3 C1562 562 1562.6 568.2 1562.2 574.5 C1561.4 582 1559.2 589.2 1556.2 595.6 C1553.8 600.4 1550.8 604.6 1547.1 607.7 C1543.2 609.6 1539 610 1535 609.2 C1530.6 606.6 1527 603 1524.4 598.6 C1521.6 594 1519.4 589 1518.4 583.5 C1517.8 579.4 1517.8 575.4 1518.4 571.4 Z" fill="url(#skin4)"/>
<path d="M1534 607 C1540 611 1548 609 1552 603 L1554 620 L1538 612 Z" fill="#96694f"/>
<path d="M1533 597 C1537 595.6 1542 596 1546 598" stroke="#7a3c34" stroke-width="2" fill="none"/>
</g>
<g filter="url(#b3)"><path d="M1521.4 572.4 C1521 578 1524 583.6 1530 584.8 C1537 585.6 1544 583 1545.6 577 Z" fill="#5a463c" opacity=".6"/><path d="M1548.6 577 C1549 582 1552 586.4 1556 586.6 C1560 586.4 1562 582 1562.2 578 Z" fill="#6a5446" opacity=".55"/></g>
<g filter="url(#b3)" fill="none" stroke="#1c1817" stroke-width="2.9" stroke-linecap="round"><path d="M1517 569.4 C1526 570 1536 572 1546 575.4 C1552 576.6 1560 577 1566.6 577.6"/><path d="M1521.4 572.4 C1521 578 1524 583.6 1530 584.8 C1537 585.6 1544 583 1545.6 577" stroke-width="2"/><path d="M1548.6 577 C1549 582 1552 586.4 1556 586.6 C1560 586.4 1562 582 1562.2 578" stroke-width="1.9"/></g>
</g>
<rect x="1396" y="622.6" width="133" height="22.2" fill="#868686"/>
<!-- tile 5 -->
<g clip-path="url(#v5)">
<rect x="1398" y="646" width="203" height="135" fill="#f3ecf7"/>
<g filter="url(#b1)">
<rect x="1398" y="646" width="23" height="114" fill="#d9d5cf"/>
<path d="M1399 656 L1415 672 L1414 682 L1399 668 Z" fill="#b8965a"/>
<path d="M1399 668 L1416 684 L1414.6 700 L1399 686 Z" fill="#5a64aa"/>
<path d="M1399 690 L1411 702 L1408 752 L1399 750 Z" fill="#e1dcd6"/>
<path d="M1409.4 702 L1413 704 L1408.8 753 L1405.6 751 Z" fill="#42342e"/>
<rect x="1420.5" y="646" width="6.2" height="114" fill="#e6e6ee"/><rect x="1426.6" y="646" width="7.8" height="114" fill="#adadb6"/><rect x="1434.2" y="646" width="6.4" height="114" fill="#878791"/><rect x="1440.4" y="646" width="4.8" height="114" fill="#c6c6d2"/>
<g stroke="#4d4d58" stroke-width="2.2" fill="none"><path d="M1446.6 657 L1443.6 758 M1455.8 671 L1452.8 758 M1465.8 685 L1463.5 731 M1472.6 696 L1472 712"/><path d="M1446 657 L1474 700 M1444 712 L1470 700" stroke-width="1.2" stroke="#8a8a96"/></g>
<g fill="url(#blind5)"><rect x="1478.1" y="646" width="3.1" height="58"/><rect x="1490.3" y="646" width="3.1" height="56"/><rect x="1501.8" y="646" width="3.2" height="60"/><rect x="1512.5" y="646" width="3.3" height="74"/><rect x="1524.7" y="646" width="3.4" height="92"/><rect x="1536.8" y="646" width="3.6" height="90"/></g>
<rect x="1516" y="721.7" width="27" height="15.4" fill="#cfd3dc" opacity=".75"/>
<rect x="1524.7" y="700" width="3.4" height="38" fill="#34343c"/><rect x="1536.8" y="700" width="3.6" height="36" fill="#34343c"/>
<rect x="1543.6" y="646" width="57" height="135" fill="#2f2f37"/>
<rect x="1551" y="646" width="6.4" height="135" fill="#5b5b63"/>
<rect x="1574.7" y="646" width="4.6" height="135" fill="#ece6f2"/><rect x="1586.2" y="646" width="3.5" height="135" fill="#ddd8e6"/><rect x="1597" y="646" width="3" height="135" fill="#c8c4d0"/>
<g stroke="#34432f" stroke-width="3.2" fill="none" opacity=".88" stroke-linecap="round"><path d="M1418 744 C1426 724 1437 712 1446 708"/><path d="M1429 758 C1433 738 1440 722 1451 714"/><path d="M1441 758 C1443 742 1450 730 1461 724"/><path d="M1452 758 C1452 746 1456 738 1464 734"/><path d="M1437 758 V712" stroke-width="2.6"/><path d="M1416 738 C1422 730 1430 728 1436 730"/><path d="M1423 758 C1424 746 1428 738 1434 734"/><path d="M1446 758 C1448 748 1452 742 1458 740" stroke-width="2.6"/></g>
<path d="M1523.3 738 C1529 734.4 1538 733.6 1543.2 735.5 L1544.8 764.6 H1527 Z" fill="#86bf20"/>
<path d="M1523.3 738 L1528 737 L1530 765 H1526 Z" fill="#5f9e12"/>
<path d="M1531 764.6 C1540 763 1550 770 1554 781 H1531 Z" fill="#1c4038"/>
<path d="M1463.5 760 C1463.4 752 1464 744 1465 737 C1465.8 730 1467.4 723 1469.6 717 C1471.8 712 1475 707.8 1478.8 704.8 C1482.4 702.2 1486.6 701 1491.1 701 C1495.6 701.4 1499.8 703.2 1503.4 706.3 C1507.6 709.6 1511.2 713.8 1514.1 718.6 C1517.4 724 1520 730.4 1521.8 737 C1523.6 744 1524.6 751.4 1524.8 760 Z" fill="#2f1f1b"/>
<path d="M1471.2 740 C1471 733 1472 727 1474.2 721.7 C1477.4 716.6 1482.4 713.4 1488 712.5 C1494 712.6 1499.4 714.8 1503.4 718.6 C1507 723.6 1509 730 1509.5 737 C1509.8 744 1509.2 752 1508 760 H1475 C1472.8 753.6 1471.6 747 1471.2 740 Z" fill="#936453"/>
<path d="M1488 726 C1490 736 1488 742 1486 747 L1494 748 C1496 742 1494 734 1493 728 Z" fill="#b4806a" opacity=".8"/>
<ellipse cx="1480.4" cy="735.6" rx="5" ry="2.6" fill="#4a2c26" opacity=".7"/><ellipse cx="1500" cy="735.8" rx="5" ry="2.6" fill="#4a2c26" opacity=".7"/>
<path d="M1466 757 C1474 753 1488 753.6 1500 756 L1502 760 H1465 Z" fill="#a5503c"/>
</g>
</g>
<rect x="1396" y="759.2" width="134.2" height="20.8" fill="#868686"/>
</svg>
<!-- status bar -->
<div class="a" style="left:241px;top:833px;width:1359px;height:1px;background:#c8c8c8;"></div>
<div class="a" style="left:0;top:836px;width:1600px;height:1px;background:#d3d3d3;"></div>
<div class="a" style="left:0;top:837px;width:1600px;height:21px;background:#f3f3f3;"></div>
<div class="a" style="left:0;top:837px;width:1600px;height:1px;background:#ececec;"></div>
<div class="a" style="left:1229.5px;top:837px;width:41px;height:21px;background:#c6c6c6;"></div>
<svg style="left:0;top:836px" width="1600" height="24" viewBox="0 836 1600 24" fill="none" stroke="#6a6a6a" stroke-width="1">
<!-- spell/accessibility icon -->
<path d="M84.5 841.8 H91 V851.6 H84.5 Z"/><path d="M91 851.6 V853.2"/>
<path d="M91 841.8 H97.8 V851.6 H91" stroke-dasharray="1.4 1"/>
<path d="M93 844.8 L97 848.8 M97 844.8 L93 848.8" stroke="#555" stroke-width="1.2"/>
<!-- notes icon -->
<path d="M1064.4 846.2 L1067 842.6 L1069.6 846.2 Z" fill="#6a6a6a" stroke="none"/>
<path d="M1061.4 847.8 H1072.6 M1061.4 850 H1072.6 M1061.4 852.3 H1068.5" stroke="#6a6a6a"/>
<!-- comments icon -->
<path d="M1134.2 841.2 H1147.4 C1147.9 841.2 1148.2 841.5 1148.2 842 V849.6 C1148.2 850.1 1147.9 850.4 1147.4 850.4 H1139.6 L1136.6 853.4 V850.4 H1134.2 C1133.7 850.4 1133.4 850.1 1133.4 849.6 V842 C1133.4 841.5 1133.7 841.2 1134.2 841.2 Z" fill="#595959" stroke="none"/>
<!-- normal view -->
<rect x="1242.5" y="841.5" width="14" height="12" stroke="#777"/><path d="M1245.5 841.5 V853.5 M1245.5 849.5 H1256.5" stroke="#777"/><rect x="1248.4" y="844" width="5.4" height="3.2" stroke="#777"/>
<!-- sorter -->
<g stroke="#777"><rect x="1284.5" y="841.5" width="5" height="4.4"/><rect x="1292.3" y="841.5" width="5" height="4.4"/><rect x="1284.5" y="848.8" width="5" height="4.4"/><rect x="1292.3" y="848.8" width="5" height="4.4"/></g>
<!-- reading view -->
<g stroke="#777"><path d="M1326.3 842 H1332.4 L1333 843 L1333.6 842 H1339.7 V852.4 H1333.6 L1333 853.4 L1332.4 852.4 H1326.3 Z M1333 843 V853"/><path d="M1328 844.6 H1331 M1328 847 H1331 M1328 849.4 H1331 M1335 844.6 H1338 M1335 847 H1338 M1335 849.4 H1338" stroke="#9a9a9a"/></g>
<!-- slideshow -->
<g stroke="#777"><path d="M1367.4 841.6 H1382"/><path d="M1369 841.8 V849.4 H1380.4 V841.8"/><path d="M1374.7 849.4 V852.8 M1371.8 853.2 H1377.6"/></g>
<!-- zoom slider -->
<path d="M1402 847.5 H1409.5" stroke="#6a6a6a" stroke-width="1.2"/>
<path d="M1415 847.7 H1519" stroke="#b4b4b4" stroke-width="1"/>
<path d="M1467 844.5 V851" stroke="#b4b4b4"/>
<rect x="1457.4" y="842" width="5" height="11" fill="#6f6f6f" stroke="none"/>
<path d="M1524.4 847.5 H1532 M1528.2 843.7 V851.3" stroke="#6a6a6a" stroke-width="1.2"/>
<!-- fit -->
<rect x="1582" y="842.2" width="10.4" height="10.4" stroke="#777"/><path d="M1584.4 846.4 V844.6 H1586.2 M1588.2 844.6 H1590 V846.4 M1590 848.4 V850.2 H1588.2 M1586.2 850.2 H1584.4 V848.4" stroke="#777"/>
</svg>
<!-- prev-slide arrows -->
<svg style="left:1583px;top:781px" width="17" height="14" viewBox="0 0 17 14"><path d="M4.6 6 L8.4 2 L12.2 6 Z M4.6 10.8 L8.4 6.8 L12.2 10.8 Z" fill="#555"/><path d="M4.2 2 H12.6" stroke="#555" stroke-width="1"/></svg>
<div class="a" style="left:1589px;top:799.5px;width:7px;height:1px;background:#777;"></div>
<!-- taskbar -->
<div class="a" style="left:0;top:858px;width:1600px;height:42px;background:linear-gradient(90deg,#d3dbde 0,#d6dde0 3%,#e4dbd7 26%,#dedad8 31%,#d9d8d8 38%,#d8d8d8 52%,#e3dcd6 62%,#e8ddd4 72%,#e2dbd6 80%,#dcdcdc 87%,#dddddd 100%);"></div>
<div class="a" style="left:51px;top:859px;width:356px;height:41px;background:#fff;"></div>
<div class="a" style="left:668px;top:858px;width:51px;height:42px;background:#eeeeee;"></div>
<div class="a" style="left:466px;top:897px;width:42px;height:3px;background:#0a74d4;"></div>
<div class="a" style="left:668px;top:897px;width:51px;height:3px;background:#0a74d4;"></div>
<div class="a" style="left:776px;top:897px;width:34px;height:3px;background:#0a6fd2;"></div>
<div class="a" style="left:810px;top:897px;width:8px;height:3px;background:#7fb2e8;"></div>
<div class="a" style="left:1595px;top:858px;width:1px;height:42px;background:#b9b9b9;"></div>
<svg style="left:0;top:858px" width="1600" height="42" viewBox="0 858 1600 42">
<!-- windows logo -->
<path d="M16.4 873.2 L23.4 872.2 V878.7 H16.4 Z M24.4 872 L33.6 870.7 V878.7 H24.4 Z M16.4 879.7 H23.4 V886.3 L16.4 885.3 Z M24.4 879.7 H33.6 V887.8 L24.4 886.5 Z" fill="#0a0a0a"/>
<!-- search magnifier -->
<circle cx="72.6" cy="876.8" r="5.4" fill="none" stroke="#222" stroke-width="1.4"/><path d="M68.8 880.8 L62.6 886.6" stroke="#222" stroke-width="1.5"/>
<!-- task view -->
<g fill="none" stroke="#1c1c1c" stroke-width="1.3"><rect x="425.6" y="874.6" width="9.6" height="8.4"/><path d="M424.4 871.4 H436.4 M424.4 886.2 H436.4"/><path d="M440.6 870.8 V886.6"/></g><rect x="439.2" y="876.6" width="2.8" height="3.4" fill="#1c1c1c"/>
<!-- chrome -->
<circle cx="486" cy="879" r="11.4" fill="#dd4b3e"/>
<path d="M486 879 L476.1 884.7 A11.4 11.4 0 0 0 486 890.4 L491.4 881 Z" fill="#1e9e57"/>
<path d="M476.1 884.7 A11.4 11.4 0 0 1 476.2 873.2 L481.5 882 Z" fill="#1e9e57"/>
<path d="M486 890.4 A11.4 11.4 0 0 0 495.9 873.3 H486 L491.6 881.8 Z" fill="#fcc934"/>
<circle cx="486" cy="879" r="5.3" fill="#fff"/><circle cx="486" cy="879" r="4.2" fill="#4a8af4"/>
<!-- explorer -->
<path d="M527 869.2 H535.6 L537.4 871.2 H549.6 V886 H527 Z" fill="#eeb02e"/>
<path d="M527 872.6 H549.8 V887.6 H527 Z" fill="#fcd565"/>
<path d="M531.2 879.4 H545.4 V887.6 H541.8 V883.4 H535 V887.6 H531.2 Z" fill="#3a8ede"/>
<!-- word -->
<rect x="583.6" y="867.8" width="18.4" height="22" rx="1.5" fill="#2b7cd3"/><rect x="583.6" y="867.8" width="18.4" height="5.6" fill="#41a5ee"/><rect x="583.6" y="878.8" width="18.4" height="5.6" fill="#185abd"/><rect x="583.6" y="884.4" width="18.4" height="5.4" fill="#103f91"/>
<rect x="577.2" y="872.6" width="12.4" height="12.4" rx="1.2" fill="#185abd"/>
<!-- excel -->
<rect x="635.4" y="867.8" width="18.4" height="22" rx="1.5" fill="#21a366"/><rect x="644.6" y="867.8" width="9.2" height="5.6" fill="#33c481"/><rect x="635.4" y="873.4" width="9.2" height="5.5" fill="#107c41"/><rect x="635.4" y="878.9" width="18.4" height="5.5" fill="#185c37"/><rect x="644.6" y="878.9" width="9.2" height="5.5" fill="#107c41"/><rect x="635.4" y="884.4" width="18.4" height="5.4" fill="#185c37"/>
<rect x="629" y="872.6" width="12.4" height="12.4" rx="1.2" fill="#107c41"/>
<!-- powerpoint -->
<circle cx="694.6" cy="879" r="10.8" fill="#ed6c47"/><path d="M694.6 868.2 A10.8 10.8 0 0 1 705.4 879 H694.6 Z" fill="#ff8f6b"/><path d="M683.8 879 A10.8 10.8 0 0 0 705.4 879 Z" fill="#d35230"/>
<rect x="680.6" y="872.6" width="12.4" height="12.4" rx="1.2" fill="#c43e1c"/>
<!-- edge -->
<defs><linearGradient id="edg" x1="0" y1="0.2" x2="1" y2="0.5"><stop offset="0" stop-color="#2b9fe2"/><stop offset=".45" stop-color="#25b8c8"/><stop offset="1" stop-color="#62dc58"/></linearGradient></defs>
<circle cx="745" cy="879" r="12.6" fill="url(#edg)"/>
<path d="M732.4 879 C732.5 875 734 871.6 736.6 869.4 C735.6 872.4 736 876 738 879 L745.4 876.8 C744.4 879.4 745 883 748.8 884.4 C752 885.8 755.6 885 757.6 883.4 C757 888 752 891.6 745 891.6 C738 891.6 732.4 886 732.4 879 Z" fill="#1a7fd2"/>
<path d="M741.6 875.6 C739 877.6 738.4 882.6 740.6 886.2 C743.4 890.6 749.8 891.6 754 888.6 C755.6 887.4 756.6 886.2 757 885 C752.6 887.4 746.6 885.6 745 881.4 C744.4 879.6 744.6 878 745.4 876.8 C744 875.4 742.6 875 741.6 875.6 Z" fill="#0f56a2"/>
<path d="M745.9 876.3 C744.5 878.6 745 882.6 748.8 884.4 C752 885.8 755.6 885 757.8 883.2 L757.8 880.4 C754.6 882.4 750.6 882.2 749.8 879.2 C749.5 877.4 748.1 875.9 745.9 876.3 Z" fill="#d9d9d9"/>
<!-- zoom -->
<rect x="784.6" y="867.6" width="23.4" height="22.8" rx="6.5" fill="#4a8cff"/>
<rect x="789.4" y="875" width="9.4" height="7.6" rx="1.6" fill="#fff"/><path d="M799.6 878 L803.4 875.4 V882.2 L799.6 879.6 Z" fill="#fff"/>
<!-- tray chevron -->
<path d="M1304.6 882.4 L1311.2 876 L1317.8 882.4" fill="none" stroke="#1c1c1c" stroke-width="1.4"/>
<!-- meet now -->
<g fill="none" stroke="#1c1c1c" stroke-width="1.2"><rect x="1331" y="875.4" width="7.6" height="7" rx="1"/><path d="M1338.6 878 L1342.4 875.8 V882 L1338.6 879.8"/><path d="M1331.4 873.2 C1334 871.2 1338.4 871.2 1341 873.2 M1331.4 884.8 C1334 886.8 1338.4 886.8 1341 884.8"/></g>
<!-- cloud -->
<defs><linearGradient id="cldg" x1="0.8" y1="0" x2="0.2" y2="1"><stop offset="0" stop-color="#f2f2f2"/><stop offset=".5" stop-color="#bdbdbd"/><stop offset="1" stop-color="#8a8a8a"/></linearGradient></defs>
<path d="M1356.2 884 C1352.8 884 1352.2 879.6 1355.6 878.8 C1355.8 875.6 1359.6 874.4 1361.4 876.6 C1362.6 873 1367.6 873.4 1367.8 877.6 C1370.2 878.2 1369.8 884 1366.8 884 Z" fill="url(#cldg)" stroke="#2c2c2c" stroke-width="1.1"/>
<!-- mic -->
<rect x="1382" y="870.8" width="7.2" height="12" rx="2.2" fill="#0c0c0c"/><path d="M1380.8 879.6 C1380.8 886 1390.4 886 1390.4 879.6 M1385.6 884.6 V887.4 M1382.8 887.6 H1388.4" fill="none" stroke="#0c0c0c" stroke-width="1.1"/>
<!-- battery -->
<rect x="1406.4" y="875.2" width="12" height="8.6" fill="#0c0c0c"/><rect x="1418.6" y="877.4" width="1.4" height="4.2" fill="#0c0c0c"/><path d="M1402.6 874.2 V877 M1405 874.2 V877 M1402 877.2 H1405.6 V879.2 C1405.6 880.6 1402 880.6 1402 879.2 Z M1403.8 880.4 V882.4 H1406.4" fill="none" stroke="#0c0c0c" stroke-width="1.1"/>
<!-- wifi -->
<g fill="none" stroke-linecap="round"><path d="M1430.6 885.4 C1431.2 879 1436.4 873.8 1443 873.4" stroke="#a8a8a8" stroke-width="1.2"/><path d="M1434.2 885.6 C1434.8 881 1438.6 877.4 1443.2 877" stroke="#3a3a3a" stroke-width="1.3"/><path d="M1437.8 885.8 C1438.2 883 1440.4 881 1443.2 880.6" stroke="#3a3a3a" stroke-width="1.3"/></g><circle cx="1442.2" cy="885" r="1.3" fill="#1c1c1c"/>
<!-- volume -->
<g fill="none" stroke="#1c1c1c" stroke-width="1.2"><path d="M1452.6 876.6 H1455.4 L1459 873.2 V885.4 L1455.4 882 H1452.6 Z"/><path d="M1461.6 876.6 C1463 878 1463 881 1461.6 882.4 M1464.2 874.6 C1466.8 877 1466.8 881.8 1464.2 884.4"/><path d="M1467 872.6 C1470.6 876 1470.6 883 1467 886.4" stroke="#a0a0a0"/></g>
<!-- notification -->
<path d="M1557.6 871 H1574.4 V884 H1562 L1557.6 887.6 Z" fill="#0c0c0c"/>
<path d="M1560.4 874.6 H1571.6 M1560.4 877.6 H1571.6 M1560.4 880.6 H1568" stroke="#dcdcdc" stroke-width="1.1"/>
<circle cx="1573.8" cy="887.4" r="8.2" fill="#dddddd" stroke="#8a8a8a" stroke-width="1"/>
</svg>

<!-- texts -->
<span class="t" style="left:20.0px;top:45.3px;font-size:13.2px;letter-spacing:-0.552px;color:#fff;">Plik</span>
<span class="t" style="left:72.3px;top:45.3px;font-size:13.2px;letter-spacing:-0.517px;color:#fff;">Narzędzia</span>
<span class="t" style="left:132.8px;top:45.3px;font-size:13.2px;letter-spacing:-0.271px;color:#fff;">główne</span>
<span class="t" style="left:196.0px;top:45.3px;font-size:13.2px;letter-spacing:-0.455px;color:#fff;">Wstawianie</span>
<span class="t" style="left:281.0px;top:45.3px;font-size:13.2px;letter-spacing:-0.292px;color:#fff;">Projektowanie</span>
<span class="t" style="left:382.0px;top:45.3px;font-size:13.2px;letter-spacing:-0.770px;color:#fff;">Przejścia</span>
<span class="t" style="left:452.0px;top:45.3px;font-size:13.2px;letter-spacing:-0.272px;color:#fff;">Animacje</span>
<span class="t" style="left:526.1px;top:45.3px;font-size:13.2px;letter-spacing:-1.115px;color:#b7472a;">Pokaz</span>
<span class="t" style="left:561.7px;top:45.3px;font-size:13.2px;letter-spacing:-0.343px;color:#b7472a;">slajdów</span>
<span class="t" style="left:626.0px;top:45.3px;font-size:13.2px;letter-spacing:-0.806px;color:#fff;">Recenzja</span>
<span class="t" style="left:698.0px;top:45.3px;font-size:13.2px;letter-spacing:-0.011px;color:#fff;">Widok</span>
<span class="t" style="left:756.0px;top:45.3px;font-size:13.2px;letter-spacing:-0.612px;color:#fff;">Pomoc</span>
<span class="t" style="left:846.7px;top:45.3px;font-size:13.2px;letter-spacing:-0.709px;color:#fff;">Powiedz</span>
<span class="t" style="left:897.7px;top:45.3px;font-size:13.2px;letter-spacing:-0.308px;color:#fff;">mi,</span>
<span class="t" style="left:917.6px;top:45.3px;font-size:13.2px;letter-spacing:-0.594px;color:#fff;">co</span>
<span class="t" style="left:934.8px;top:45.3px;font-size:13.2px;letter-spacing:-1.270px;color:#fff;">chcesz</span>
<span class="t" style="left:973.3px;top:45.3px;font-size:13.2px;letter-spacing:-0.297px;color:#fff;">zrobić</span>
<span class="t" style="left:1516.0px;top:46.8px;font-size:13.2px;letter-spacing:-0.265px;color:#fff;">Udostępnij</span>
<span class="t" style="left:1251.5px;top:9.3px;font-size:13.2px;letter-spacing:-0.303px;color:#fff;">Magdalena</span>
<span class="t" style="left:1318.5px;top:9.3px;font-size:13.2px;letter-spacing:-1.010px;color:#fff;">Pikulska</span>
<span class="t" style="left:705.3px;top:4.9px;font-size:12.5px;letter-spacing:-0.373px;color:#1c2b3a;font-weight:700;">You</span>
<span class="t" style="left:731.1px;top:4.9px;font-size:12.5px;letter-spacing:-0.408px;color:#1c2b3a;font-weight:700;">are</span>
<span class="t" style="left:753.2px;top:4.9px;font-size:12.5px;letter-spacing:-0.654px;color:#1c2b3a;font-weight:700;">screen</span>
<span class="t" style="left:793.7px;top:4.9px;font-size:12.5px;letter-spacing:-0.335px;color:#1c2b3a;font-weight:700;">sharing</span>
<span class="t" style="left:919.0px;top:3.9px;font-size:12.5px;letter-spacing:-1.112px;color:#fff;font-weight:700;">Stop</span>
<span class="t" style="left:948.3px;top:3.9px;font-size:12.5px;letter-spacing:-0.947px;color:#fff;font-weight:700;">Share</span>
<span class="t" style="left:26.6px;top:111.3px;font-size:12.6px;letter-spacing:-0.396px;color:#444444;">Od</span>
<span class="t" style="left:10.4px;top:127.8px;font-size:12.6px;letter-spacing:-0.172px;color:#444444;">początku</span>
<span class="t" style="left:64.5px;top:111.3px;font-size:12.6px;letter-spacing:-0.896px;color:#444444;">Od</span>
<span class="t" style="left:85.3px;top:111.3px;font-size:12.6px;letter-spacing:-0.164px;color:#444444;">bieżącego</span>
<span class="t" style="left:86.6px;top:127.8px;font-size:12.6px;letter-spacing:-0.020px;color:#444444;">slajdu</span>
<span class="t" style="left:154.6px;top:111.3px;font-size:12.6px;letter-spacing:-0.201px;color:#444444;">Prezentuj</span>
<span class="t" style="left:159.4px;top:127.8px;font-size:12.6px;letter-spacing:-0.122px;color:#444444;">online</span>
<span class="t" style="left:209.4px;top:111.3px;font-size:12.6px;letter-spacing:-0.062px;color:#444444;">Niestandardowy</span>
<span class="t" style="left:212.2px;top:127.8px;font-size:12.6px;letter-spacing:-0.252px;color:#444444;">pokaz</span>
<span class="t" style="left:250.0px;top:127.8px;font-size:12.6px;letter-spacing:-0.384px;color:#444444;">slajdów</span>
<span class="t" style="left:334.4px;top:111.3px;font-size:12.6px;letter-spacing:0.038px;color:#444444;">Przygotuj</span>
<span class="t" style="left:321.2px;top:127.8px;font-size:12.6px;letter-spacing:-0.227px;color:#444444;">pokaz</span>
<span class="t" style="left:358.4px;top:127.8px;font-size:12.6px;letter-spacing:-0.301px;color:#444444;">slajdów</span>
<span class="t" style="left:410.4px;top:111.3px;font-size:12.6px;letter-spacing:-0.171px;color:#444444;">Ukryj</span>
<span class="t" style="left:411.2px;top:127.8px;font-size:12.6px;letter-spacing:-0.124px;color:#444444;">slajd</span>
<span class="t" style="left:459.4px;top:111.3px;font-size:12.6px;letter-spacing:-0.250px;color:#444444;">Próba</span>
<span class="t" style="left:459.0px;top:127.8px;font-size:12.6px;letter-spacing:-0.099px;color:#444444;">tempa</span>
<span class="t" style="left:499.9px;top:111.3px;font-size:12.6px;letter-spacing:0.100px;color:#444444;">Nagraj</span>
<span class="t" style="left:541.5px;top:111.3px;font-size:12.6px;letter-spacing:-0.227px;color:#444444;">pokaz</span>
<span class="t" style="left:512.0px;top:127.8px;font-size:12.6px;letter-spacing:-0.084px;color:#444444;">slajdów</span>
<span class="t" style="left:599.0px;top:84.9px;font-size:12.6px;letter-spacing:-0.011px;color:#b8b8b8;">Aktualizuj</span>
<span class="t" style="left:656.0px;top:84.9px;font-size:12.6px;letter-spacing:-0.300px;color:#b8b8b8;">slajdy</span>
<span class="t" style="left:599.0px;top:117.1px;font-size:12.6px;letter-spacing:0.068px;color:#444444;">Odtwórz</span>
<span class="t" style="left:649.4px;top:117.1px;font-size:12.6px;letter-spacing:-0.271px;color:#444444;">narrację</span>
<span class="t" style="left:722.7px;top:84.9px;font-size:12.6px;letter-spacing:-0.563px;color:#444444;">Użyj</span>
<span class="t" style="left:749.6px;top:84.9px;font-size:12.6px;letter-spacing:-0.141px;color:#444444;">chronometrażu</span>
<span class="t" style="left:721.7px;top:117.1px;font-size:12.6px;letter-spacing:-0.701px;color:#444444;">Pokaż</span>
<span class="t" style="left:758.2px;top:117.1px;font-size:12.6px;letter-spacing:-0.037px;color:#444444;">kontrolki</span>
<span class="t" style="left:809.2px;top:117.1px;font-size:12.6px;letter-spacing:-0.211px;color:#444444;">sterowania</span>
<span class="t" style="left:873.5px;top:117.1px;font-size:12.6px;letter-spacing:0.229px;color:#444444;">multimediami</span>
<span class="t" style="left:996.6px;top:84.9px;font-size:12.6px;letter-spacing:0.401px;color:#444444;">Monitor:</span>
<span class="t" style="left:1052.0px;top:84.9px;font-size:12.6px;letter-spacing:-0.049px;color:#444444;">Automatycznie</span>
<span class="t" style="left:996.0px;top:117.1px;font-size:12.6px;letter-spacing:-0.563px;color:#444444;">Użyj</span>
<span class="t" style="left:1024.6px;top:117.1px;font-size:12.6px;letter-spacing:-0.560px;color:#444444;">widoku</span>
<span class="t" style="left:1066.0px;top:117.1px;font-size:12.6px;letter-spacing:-0.200px;color:#444444;">prezentera</span>
<span class="t" style="left:79.5px;top:148.2px;font-size:11.6px;letter-spacing:-0.610px;color:#444444;">Rozpoczynanie</span>
<span class="t" style="left:155.9px;top:148.2px;font-size:11.6px;letter-spacing:-0.727px;color:#444444;">pokazu</span>
<span class="t" style="left:194.1px;top:148.2px;font-size:11.6px;letter-spacing:-0.599px;color:#444444;">slajdów</span>
<span class="t" style="left:596.0px;top:148.2px;font-size:11.6px;letter-spacing:-0.483px;color:#444444;">Przygotowywanie</span>
<span class="t" style="left:1062.4px;top:148.2px;font-size:11.6px;letter-spacing:-0.066px;color:#444444;">Monitory</span>
<span class="t" style="left:8.6px;top:842.1px;font-size:11.6px;letter-spacing:-0.708px;color:#444444;">Slajd</span>
<span class="t" style="left:34.3px;top:842.1px;font-size:11.6px;color:#444444;">3</span>
<span class="t" style="left:43.5px;top:842.1px;font-size:11.6px;color:#444444;">z</span>
<span class="t" style="left:52.5px;top:842.1px;font-size:11.6px;letter-spacing:-1.148px;color:#444444;">45</span>
<span class="t" style="left:1078.0px;top:841.7px;font-size:11.6px;letter-spacing:-0.168px;color:#444444;">Notatki</span>
<span class="t" style="left:1151.0px;top:841.7px;font-size:11.6px;letter-spacing:-0.451px;color:#444444;">Komentarze</span>
<span class="t" style="left:1545.7px;top:842.0px;font-size:11.2px;letter-spacing:-1.072px;color:#444444;">86%</span>
<span class="t" style="left:1512.0px;top:806.3px;font-size:12.6px;letter-spacing:-0.051px;color:#5a5a5a;">Poprzedni</span>
<span class="t" style="left:1572.2px;top:806.3px;font-size:12.6px;letter-spacing:-0.274px;color:#5a5a5a;">slajd</span>
<span class="t" style="left:92.2px;top:871.7px;font-size:15.6px;letter-spacing:-0.313px;color:#2b2b2b;">Wpisz</span>
<span class="t" style="left:138.8px;top:871.7px;font-size:15.6px;letter-spacing:0.368px;color:#2b2b2b;">tu</span>
<span class="t" style="left:158.2px;top:871.7px;font-size:15.6px;letter-spacing:-0.199px;color:#2b2b2b;">wyszukiwane</span>
<span class="t" style="left:252.6px;top:871.7px;font-size:15.6px;letter-spacing:-0.174px;color:#2b2b2b;">słowa</span>
<span class="t" style="left:1494.4px;top:864.1px;font-size:12.2px;letter-spacing:-0.530px;color:#1a1a1a;">09:19</span>
<span class="t" style="left:1480.8px;top:883.0px;font-size:12.2px;letter-spacing:-0.558px;color:#1a1a1a;">15.01.2021</span>
<span class="t" style="left:1570.8px;top:882.3px;font-size:11px;color:#1a1a1a;-webkit-text-stroke:0.35px #1a1a1a;">4</span>
<span class="t" style="left:11.5px;top:181.0px;font-size:14.5px;color:#505050;">1</span>
<span class="t" style="left:12.9px;top:293.7px;font-size:14.5px;color:#505050;">2</span>
<span class="t" style="left:12.9px;top:406.3px;font-size:14.5px;color:#d24726;">3</span>
<span class="t" style="left:12.8px;top:519.0px;font-size:14.5px;color:#505050;">4</span>
<span class="t" style="left:12.9px;top:631.7px;font-size:14.5px;color:#505050;">5</span>
<span class="t" style="left:12.9px;top:744.3px;font-size:14.5px;color:#505050;">6</span>
<span class="t" style="left:522.9px;top:307.7px;font-size:27.4px;letter-spacing:2.329px;color:#0d0d0d;-webkit-text-stroke:0.5px #0d0d0d;">Mój</span>
<span class="t" style="left:581.0px;top:307.7px;font-size:27.4px;letter-spacing:0.762px;color:#0d0d0d;-webkit-text-stroke:0.5px #0d0d0d;">obszar</span>
<span class="t" style="left:681.4px;top:307.7px;font-size:27.4px;letter-spacing:2.014px;color:#0d0d0d;-webkit-text-stroke:0.5px #0d0d0d;">zawodowy:</span>
<span class="t" style="left:466.7px;top:339.7px;font-size:27.4px;letter-spacing:0.390px;color:#0d0d0d;-webkit-text-stroke:0.5px #0d0d0d;">stanowisko,</span>
<span class="t" style="left:623.7px;top:339.7px;font-size:27.4px;letter-spacing:0.404px;color:#0d0d0d;-webkit-text-stroke:0.5px #0d0d0d;">zakres</span>
<span class="t" style="left:717.9px;top:339.7px;font-size:27.4px;letter-spacing:1.611px;color:#0d0d0d;-webkit-text-stroke:0.5px #0d0d0d;">obowiązków,</span>
<span class="t" style="left:556.8px;top:371.5px;font-size:27.4px;letter-spacing:0.541px;color:#0d0d0d;-webkit-text-stroke:0.5px #0d0d0d;">jak</span>
<span class="t" style="left:604.0px;top:371.5px;font-size:27.4px;letter-spacing:1.854px;color:#0d0d0d;-webkit-text-stroke:0.5px #0d0d0d;">długo</span>
<span class="t" style="left:689.8px;top:371.5px;font-size:27.4px;letter-spacing:0.638px;color:#0d0d0d;-webkit-text-stroke:0.5px #0d0d0d;">pracuję?</span>
<span class="t" style="left:972.4px;top:307.7px;font-size:27.4px;letter-spacing:0.754px;color:#0d0d0d;-webkit-text-stroke:0.5px #0d0d0d;">Sytuacje</span>
<span class="t" style="left:1094.4px;top:307.7px;font-size:27.4px;letter-spacing:0.934px;color:#0d0d0d;-webkit-text-stroke:0.5px #0d0d0d;">trudne</span>
<span class="t" style="left:1188.9px;top:307.7px;font-size:27.4px;color:#0d0d0d;-webkit-text-stroke:0.5px #0d0d0d;">w</span>
<span class="t" style="left:1219.3px;top:307.7px;font-size:27.4px;letter-spacing:-0.002px;color:#0d0d0d;-webkit-text-stroke:0.5px #0d0d0d;">miejscu</span>
<span class="t" style="left:942.9px;top:339.7px;font-size:27.4px;letter-spacing:1.337px;color:#0d0d0d;-webkit-text-stroke:0.5px #0d0d0d;">pracy-konkretnie</span>
<span class="t" style="left:1177.1px;top:339.7px;font-size:27.4px;color:#0d0d0d;-webkit-text-stroke:0.5px #0d0d0d;">w</span>
<span class="t" style="left:1207.2px;top:339.7px;font-size:27.4px;letter-spacing:0.447px;color:#0d0d0d;-webkit-text-stroke:0.5px #0d0d0d;">kontekście</span>
<span class="t" style="left:1011.6px;top:371.5px;font-size:27.4px;letter-spacing:1.229px;color:#0d0d0d;-webkit-text-stroke:0.5px #0d0d0d;">wykonywanej</span>
<span class="t" style="left:1197.4px;top:371.5px;font-size:27.4px;letter-spacing:2.054px;color:#0d0d0d;-webkit-text-stroke:0.5px #0d0d0d;">pracy</span>
<span class="t" style="left:514.5px;top:607.8px;font-size:27.4px;letter-spacing:1.084px;color:#0d0d0d;-webkit-text-stroke:0.5px #0d0d0d;">Historia</span>
<span class="t" style="left:625.1px;top:607.8px;font-size:27.4px;letter-spacing:1.841px;color:#0d0d0d;-webkit-text-stroke:0.5px #0d0d0d;">nadania</span>
<span class="t" style="left:746.1px;top:607.8px;font-size:27.4px;letter-spacing:0.710px;color:#0d0d0d;-webkit-text-stroke:0.5px #0d0d0d;">imienia</span>
<span class="t" style="left:933.5px;top:591.6px;font-size:27.4px;letter-spacing:1.563px;color:#0d0d0d;-webkit-text-stroke:0.5px #0d0d0d;">Dlaczego</span>
<span class="t" style="left:1070.4px;top:591.6px;font-size:27.4px;letter-spacing:-0.910px;color:#0d0d0d;-webkit-text-stroke:0.5px #0d0d0d;">to</span>
<span class="t" style="left:1104.2px;top:591.6px;font-size:27.4px;letter-spacing:0.023px;color:#0d0d0d;-webkit-text-stroke:0.5px #0d0d0d;">szkolenie?</span>
<span class="t" style="left:1245.2px;top:591.6px;font-size:27.4px;letter-spacing:-0.581px;color:#0d0d0d;-webkit-text-stroke:0.5px #0d0d0d;">Co</span>
<span class="t" style="left:1291.6px;top:591.6px;font-size:27.4px;letter-spacing:-0.408px;color:#0d0d0d;-webkit-text-stroke:0.5px #0d0d0d;">chcę</span>
<span class="t" style="left:982.4px;top:623.4px;font-size:27.4px;letter-spacing:-2.190px;color:#0d0d0d;-webkit-text-stroke:0.5px #0d0d0d;">się</span>
<span class="t" style="left:1027.3px;top:623.4px;font-size:27.4px;letter-spacing:1.263px;color:#0d0d0d;-webkit-text-stroke:0.5px #0d0d0d;">dowiedzieć/zmienić?</span>
<span class="t" style="left:791.2px;top:468.3px;font-size:39.8px;letter-spacing:-1.925px;color:#0d0d0d;-webkit-text-stroke:0.3px #0d0d0d;">INTEGRACJA</span>
<span class="t" style="left:122.0px;top:253.5px;font-size:3px;letter-spacing:-0.133px;color:#555;font-weight:700;">KOMUNIKACJA</span>
<span class="t" style="left:52.0px;top:309.9px;font-size:7.4px;transform-origin:0 0;transform:scaleX(0.6484);color:#2a2024;font-weight:700;">KONTRAKT</span>
<span class="t" style="left:56.0px;top:323.7px;font-size:3.6px;letter-spacing:-0.464px;color:#222;font-weight:700;">jesteśmy punktualni</span>
<span class="t" style="left:56.0px;top:329.7px;font-size:3.6px;letter-spacing:-0.319px;color:#222;font-weight:700;">wyciszamy telefony/urządzenia</span>
<span class="t" style="left:55.0px;top:335.4px;font-size:3.6px;letter-spacing:-0.255px;color:#222;font-weight:700;">zgłaszamy potrzeby przerw na bieżąco</span>
<span class="t" style="left:56.0px;top:341.7px;font-size:3.6px;letter-spacing:-0.458px;color:#222;font-weight:700;">jesteśmy aktywni</span>
<span class="t" style="left:56.0px;top:347.7px;font-size:3.6px;letter-spacing:-0.357px;color:#222;font-weight:700;">jesteśmy „tu” i „teraz”</span>
<span class="t" style="left:55.0px;top:353.7px;font-size:3.6px;letter-spacing:-0.324px;color:#222;font-weight:700;">zachowujemy tajemnicę grupy</span>
<span class="t" style="left:55.0px;top:360.5px;font-size:3.6px;letter-spacing:-0.265px;color:#222;font-weight:700;">nie przerywamy sobie nawzajem</span>
<span class="t" style="left:55.0px;top:366.2px;font-size:3.6px;letter-spacing:-0.287px;color:#222;font-weight:700;">nie oceniamy siebie nawzajem</span>
<span class="t" style="left:55.0px;top:372.0px;font-size:3.6px;letter-spacing:-0.329px;color:#222;font-weight:700;">mówimy w języku „ja”</span>
<span class="t" style="left:52.0px;top:535.0px;font-size:7.4px;transform-origin:0 0;transform:scaleX(0.6682);color:#2a2024;font-weight:700;">BUDOWANIE ZESPOŁU</span>
<span class="t" style="left:52.5px;top:550.2px;font-size:3.3px;letter-spacing:-0.006px;color:#222;font-weight:700;">Z OGÓLNYCH CECH WYRÓŻNIAJĄCYCH ZESPÓŁ MOŻEMY WYMIENIĆ TE</span>
<span class="t" style="left:52.5px;top:554.0px;font-size:3.3px;letter-spacing:0.248px;color:#222;font-weight:700;">NAJBARDZIEJ ISTOTNE DLA BUDOWANIA ZESPOŁU:</span>
<span class="t" style="left:55.6px;top:559.7px;font-size:3.4px;letter-spacing:-0.217px;color:#222;font-weight:700;">wzajemnie uzupełnia zespołu</span>
<span class="t" style="left:54.6px;top:566.5px;font-size:3.4px;letter-spacing:-0.185px;color:#222;font-weight:700;">motywacja członków zespołu</span>
<span class="t" style="left:54.6px;top:572.2px;font-size:3.4px;letter-spacing:-0.079px;color:#222;font-weight:700;">Świadomość konieczności i posiadanie celu członków zespołu</span>
<span class="t" style="left:54.6px;top:578.8px;font-size:3.4px;letter-spacing:-0.226px;color:#222;font-weight:700;">komunikacja</span>
<span class="t" style="left:55.6px;top:584.8px;font-size:3.4px;letter-spacing:-0.145px;color:#222;font-weight:700;">wzajemne na cele</span>
<span class="t" style="left:54.6px;top:590.5px;font-size:3.4px;letter-spacing:-0.162px;color:#222;font-weight:700;">rozwiązywanie konfliktów</span>
<span class="t" style="left:54.6px;top:597.0px;font-size:3.4px;letter-spacing:-0.191px;color:#222;font-weight:700;">zespołowy nastrój</span>
<span class="t" style="left:52.0px;top:647.4px;font-size:7.4px;transform-origin:0 0;transform:scaleX(0.6706);color:#2a2024;font-weight:700;">FAZY BUDOWANIA ZESPOŁU WG TUCKMANA</span>
<span class="t" style="left:52.8px;top:671.1px;font-size:3.2px;letter-spacing:0.090px;color:#222;font-weight:700;">1. FAZA ORIENTACJI LUB FORMOWANIA</span>
<span class="t" style="left:52.8px;top:677.4px;font-size:3.2px;letter-spacing:0.071px;color:#222;font-weight:700;">2. FAZA INTEGRACJI LUB NORMOWANIA</span>
<span class="t" style="left:52.8px;top:683.5px;font-size:3.2px;letter-spacing:-0.022px;color:#222;font-weight:700;">3. FAZA WALCZENIA, KRYZYSU, ODPOWIEDZIALNOŚCI LUB KONFLIKTU</span>
<span class="t" style="left:52.8px;top:690.3px;font-size:3.2px;letter-spacing:0.186px;color:#222;font-weight:700;">4. FAZA PRZELAMANIA, WSPÓŁPRACY I DZIAŁANIA</span>
<span class="t" style="left:52.0px;top:759.9px;font-size:7.4px;transform-origin:0 0;transform:scaleX(0.6734);color:#2a2024;font-weight:700;">FAZA ORIENTACJI LUB FORMOWANIA</span>
<span class="t" style="left:51.7px;top:778.0px;font-size:2.9px;letter-spacing:0.272px;color:#6a6a6a;">• Ludzie się nie znają, zaczynają dopiero się poznawać, są więc ostrożni. Tę fazę</span>
<span class="t" style="left:52.6px;top:782.0px;font-size:2.9px;letter-spacing:0.266px;color:#6a6a6a;">można rozpoznać po tym, że gdyby zadać pytanie jednemu członkowi zespołu, co</span>
<span class="t" style="left:52.6px;top:786.0px;font-size:2.9px;letter-spacing:0.286px;color:#6a6a6a;">myśli o innym, 99% odpowie: „to sympatyczny/miły człowiek” (choć może myśleć</span>
<span class="t" style="left:52.6px;top:789.7px;font-size:2.9px;letter-spacing:0.055px;color:#6a6a6a;">inaczej).</span>
<span class="t" style="left:51.7px;top:796.2px;font-size:2.9px;letter-spacing:0.287px;color:#6a6a6a;">• Można kwestie: jak się zachować, żeby było bezpiecznie? Jakie nastawienie do</span>
<span class="t" style="left:52.6px;top:799.8px;font-size:2.9px;letter-spacing:0.189px;color:#6a6a6a;">sytuacji mają inni?, jak jestem postrzegany przez innych?, co jest mile widziane, a co</span>
<span class="t" style="left:52.6px;top:803.7px;font-size:2.9px;letter-spacing:0.327px;color:#6a6a6a;">nie?, czy można się pokazać takim, jakim jest się naprawdę?, w kim będę miał</span>
<span class="t" style="left:52.6px;top:807.7px;font-size:2.9px;letter-spacing:0.187px;color:#6a6a6a;">wsparcie?</span>
<span class="t" style="left:51.7px;top:813.4px;font-size:2.9px;letter-spacing:0.597px;color:#6a6a6a;">• Charakterystyczna jest niechęć do przyjmowania na siebie ciężaru</span>
<span class="t" style="left:52.6px;top:817.5px;font-size:2.9px;letter-spacing:0.220px;color:#6a6a6a;">konstruktywnego budowania stosunków interpersonalnych w grupie.</span>
<span class="t" style="left:578.7px;top:874.1px;font-size:10.4px;color:#fff;font-weight:700;">W</span>
<span class="t" style="left:632.1px;top:874.1px;font-size:10.4px;color:#fff;font-weight:700;">X</span>
<span class="t" style="left:683.7px;top:874.1px;font-size:10.4px;color:#fff;font-weight:700;">P</span>
</div>
</body>
</html>
